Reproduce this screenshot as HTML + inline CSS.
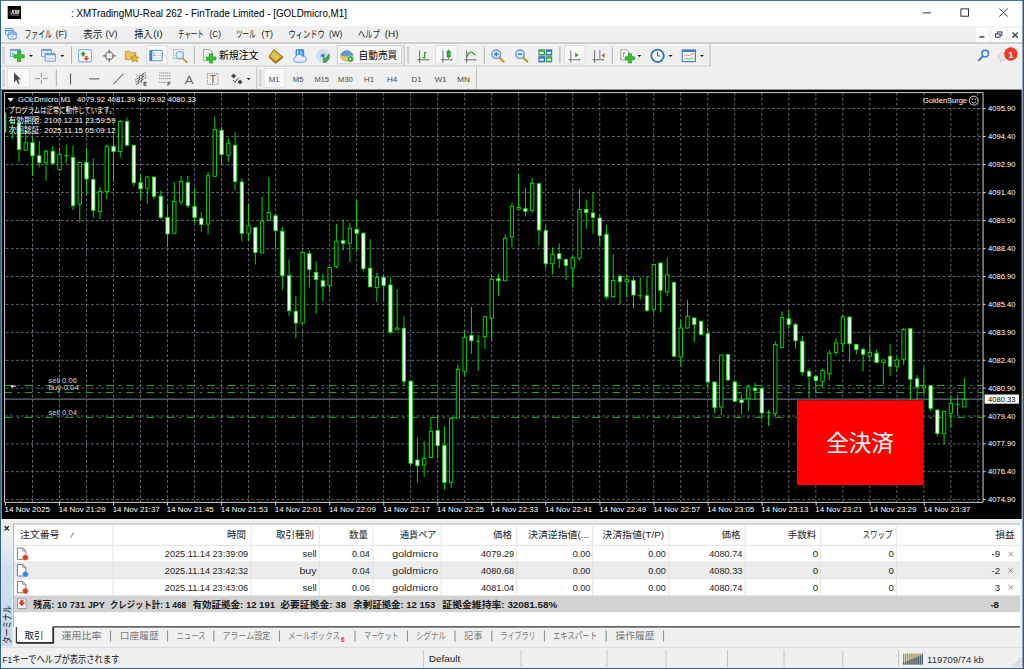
<!DOCTYPE html>
<html lang="ja"><head><meta charset="utf-8"><title>MetaTrader 4 - GOLDmicro,M1</title>
<style>html,body{margin:0;padding:0;background:#f0f0f0}body{width:1024px;height:669px;overflow:hidden;position:relative;font-family:"Liberation Sans",sans-serif}svg text{white-space:pre}</style></head>
<body>
<svg width="1024" height="669" viewBox="0 0 1024 669" font-family='"Liberation Sans", sans-serif' style="position:absolute;left:0;top:0;display:block"><rect x="0.00" y="0.00" width="1024.00" height="669.00" fill="#f0f0f0"/>
<rect x="0.00" y="0.00" width="1024.00" height="26.20" fill="#ffffff"/>
<rect x="7.70" y="6.00" width="13.30" height="13.00" fill="#000000"/>
<g transform="translate(14.6 13.6) skewX(-12)"><text x="0" y="0" font-size="6.2" font-weight="bold" fill="#ffffff" text-anchor="middle" textLength="8.4" lengthAdjust="spacingAndGlyphs">XM</text></g>
<rect x="9.30" y="10.60" width="1.20" height="2.20" fill="#d01818"/>
<rect x="10.40" y="14.60" width="8.60" height="0.80" fill="#b0b0b0"/>
<text x="71.00" y="17.20" font-size="10.20" fill="#000000" textLength="276.00" lengthAdjust="spacingAndGlyphs">: XMTradingMU-Real 262 - FinTrade Limited - [GOLDmicro,M1]</text>
<line x1="922.90" y1="12.90" x2="931.00" y2="12.90" stroke="#1a1a1a" stroke-width="0.9"/>
<rect x="960.90" y="8.90" width="7.60" height="7.30" fill="none" stroke="#1a1a1a" stroke-width="0.9"/>
<path d="M999.3 8.6 L1007.8 16.5 M1007.8 8.6 L999.3 16.5" stroke="#1a1a1a" stroke-width="0.9" fill="none"/>
<g fill="#ffffff" stroke="#4a8fd8" stroke-width="1"><rect x="5.6" y="28.6" width="7.6" height="6.6" rx="1"/><rect x="8.2" y="32.2" width="8" height="6.8" rx="1"/></g><path d="M5.6 30.6 h7.6 M8.2 34.2 h8" stroke="#4a8fd8" stroke-width="1.2"/><path d="M10 37.4 l1.2 -1.6 l1.2 1.6 l1.2 -1.6" stroke="#4a8fd8" stroke-width="0.6" fill="none"/>
<text x="24.40" y="37.60" font-size="10" fill="#1a1a1a" font-family="'Liberation Sans','Noto Sans CJK JP',sans-serif" textLength="27.50" lengthAdjust="spacingAndGlyphs">ファイル</text>
<text x="55.60" y="37.40" font-size="9.80" fill="#1a1a1a" textLength="11.30" lengthAdjust="spacingAndGlyphs">(F)</text>
<text x="83.00" y="37.60" font-size="10" fill="#1a1a1a" font-family="'Liberation Sans','Noto Sans CJK JP',sans-serif" textLength="19.50" lengthAdjust="spacingAndGlyphs">表示</text>
<text x="105.60" y="37.40" font-size="9.80" fill="#1a1a1a" textLength="11.90" lengthAdjust="spacingAndGlyphs">(V)</text>
<text x="134.25" y="37.60" font-size="10" fill="#1a1a1a" font-family="'Liberation Sans','Noto Sans CJK JP',sans-serif" textLength="18.24" lengthAdjust="spacingAndGlyphs">挿入</text>
<text x="153.20" y="37.40" font-size="9.80" fill="#1a1a1a" textLength="9.30" lengthAdjust="spacingAndGlyphs">(I)</text>
<text x="178.00" y="37.60" font-size="10" fill="#1a1a1a" font-family="'Liberation Sans','Noto Sans CJK JP',sans-serif" textLength="25.76" lengthAdjust="spacingAndGlyphs">チャート</text>
<text x="209.50" y="37.40" font-size="9.80" fill="#1a1a1a" textLength="11.50" lengthAdjust="spacingAndGlyphs">(C)</text>
<text x="236.00" y="37.60" font-size="10" fill="#1a1a1a" font-family="'Liberation Sans','Noto Sans CJK JP',sans-serif" textLength="19.50" lengthAdjust="spacingAndGlyphs">ツール</text>
<text x="261.50" y="37.40" font-size="9.80" fill="#1a1a1a" textLength="11.50" lengthAdjust="spacingAndGlyphs">(T)</text>
<text x="288.50" y="37.60" font-size="10" fill="#1a1a1a" font-family="'Liberation Sans','Noto Sans CJK JP',sans-serif" textLength="36.25" lengthAdjust="spacingAndGlyphs">ウィンドウ</text>
<text x="329.00" y="37.40" font-size="9.80" fill="#1a1a1a" textLength="13.25" lengthAdjust="spacingAndGlyphs">(W)</text>
<text x="358.00" y="37.60" font-size="10" fill="#1a1a1a" font-family="'Liberation Sans','Noto Sans CJK JP',sans-serif" textLength="21.75" lengthAdjust="spacingAndGlyphs">ヘルプ</text>
<text x="384.75" y="37.40" font-size="9.80" fill="#1a1a1a" textLength="13.75" lengthAdjust="spacingAndGlyphs">(H)</text>
<rect x="976.00" y="27.80" width="13.10" height="13.70" fill="#fdfdfd"/>
<rect x="991.60" y="27.80" width="14.00" height="13.70" fill="#fdfdfd"/>
<rect x="1007.60" y="27.80" width="13.80" height="13.70" fill="#fdfdfd"/>
<line x1="979.40" y1="36.90" x2="984.40" y2="36.90" stroke="#44546a" stroke-width="1.6"/>
<g fill="none" stroke="#44546a" stroke-width="1.1"><rect x="997.4" y="31.9" width="4.4" height="3.4"/><rect x="995.6" y="33.9" width="4.4" height="3.4" fill="#fdfdfd"/></g>
<path d="M1012.5 32.5 L1017.7 37.6 M1017.7 32.5 L1012.5 37.6" stroke="#44546a" stroke-width="1.6" fill="none"/>
<line x1="0.00" y1="43.20" x2="1024.00" y2="43.20" stroke="#8c8c8c" stroke-width="1.0"/>
<line x1="0.00" y1="44.00" x2="1024.00" y2="44.00" stroke="#ffffff" stroke-width="0.8"/>
<line x1="0.00" y1="66.30" x2="710.00" y2="66.30" stroke="#b4b4b4" stroke-width="0.9"/>
<line x1="710.00" y1="44.00" x2="710.00" y2="66.60" stroke="#b4b4b4" stroke-width="0.9"/>
<line x1="0.00" y1="67.10" x2="710.00" y2="67.10" stroke="#ffffff" stroke-width="0.8"/>
<line x1="476.50" y1="67.50" x2="476.50" y2="88.80" stroke="#b4b4b4" stroke-width="0.9"/>
<line x1="256.80" y1="67.50" x2="256.80" y2="88.80" stroke="#b4b4b4" stroke-width="0.9"/>
<line x1="404.00" y1="45.00" x2="404.00" y2="66.00" stroke="#b4b4b4" stroke-width="0.9"/>
<rect x="2.40" y="47.00" width="2.40" height="0.90" fill="#b8b8b8"/>
<rect x="2.40" y="48.70" width="2.40" height="0.90" fill="#b8b8b8"/>
<rect x="2.40" y="50.40" width="2.40" height="0.90" fill="#b8b8b8"/>
<rect x="2.40" y="52.10" width="2.40" height="0.90" fill="#b8b8b8"/>
<rect x="2.40" y="53.80" width="2.40" height="0.90" fill="#b8b8b8"/>
<rect x="2.40" y="55.50" width="2.40" height="0.90" fill="#b8b8b8"/>
<rect x="2.40" y="57.20" width="2.40" height="0.90" fill="#b8b8b8"/>
<rect x="2.40" y="58.90" width="2.40" height="0.90" fill="#b8b8b8"/>
<rect x="2.40" y="60.60" width="2.40" height="0.90" fill="#b8b8b8"/>
<rect x="2.40" y="62.30" width="2.40" height="0.90" fill="#b8b8b8"/>
<rect x="2.40" y="70.00" width="2.40" height="0.90" fill="#b8b8b8"/>
<rect x="2.40" y="71.70" width="2.40" height="0.90" fill="#b8b8b8"/>
<rect x="2.40" y="73.40" width="2.40" height="0.90" fill="#b8b8b8"/>
<rect x="2.40" y="75.10" width="2.40" height="0.90" fill="#b8b8b8"/>
<rect x="2.40" y="76.80" width="2.40" height="0.90" fill="#b8b8b8"/>
<rect x="2.40" y="78.50" width="2.40" height="0.90" fill="#b8b8b8"/>
<rect x="2.40" y="80.20" width="2.40" height="0.90" fill="#b8b8b8"/>
<rect x="2.40" y="81.90" width="2.40" height="0.90" fill="#b8b8b8"/>
<rect x="2.40" y="83.60" width="2.40" height="0.90" fill="#b8b8b8"/>
<rect x="2.40" y="85.30" width="2.40" height="0.90" fill="#b8b8b8"/>
<rect x="259.20" y="70.00" width="2.40" height="0.90" fill="#b8b8b8"/>
<rect x="259.20" y="71.70" width="2.40" height="0.90" fill="#b8b8b8"/>
<rect x="259.20" y="73.40" width="2.40" height="0.90" fill="#b8b8b8"/>
<rect x="259.20" y="75.10" width="2.40" height="0.90" fill="#b8b8b8"/>
<rect x="259.20" y="76.80" width="2.40" height="0.90" fill="#b8b8b8"/>
<rect x="259.20" y="78.50" width="2.40" height="0.90" fill="#b8b8b8"/>
<rect x="259.20" y="80.20" width="2.40" height="0.90" fill="#b8b8b8"/>
<rect x="259.20" y="81.90" width="2.40" height="0.90" fill="#b8b8b8"/>
<rect x="259.20" y="83.60" width="2.40" height="0.90" fill="#b8b8b8"/>
<rect x="259.20" y="85.30" width="2.40" height="0.90" fill="#b8b8b8"/>
<rect x="407.00" y="47.00" width="2.40" height="0.90" fill="#b8b8b8"/>
<rect x="407.00" y="48.70" width="2.40" height="0.90" fill="#b8b8b8"/>
<rect x="407.00" y="50.40" width="2.40" height="0.90" fill="#b8b8b8"/>
<rect x="407.00" y="52.10" width="2.40" height="0.90" fill="#b8b8b8"/>
<rect x="407.00" y="53.80" width="2.40" height="0.90" fill="#b8b8b8"/>
<rect x="407.00" y="55.50" width="2.40" height="0.90" fill="#b8b8b8"/>
<rect x="407.00" y="57.20" width="2.40" height="0.90" fill="#b8b8b8"/>
<rect x="407.00" y="58.90" width="2.40" height="0.90" fill="#b8b8b8"/>
<rect x="407.00" y="60.60" width="2.40" height="0.90" fill="#b8b8b8"/>
<rect x="407.00" y="62.30" width="2.40" height="0.90" fill="#b8b8b8"/>
<line x1="71.50" y1="46.60" x2="71.50" y2="63.50" stroke="#a8a8a8" stroke-width="0.9"/>
<line x1="194.30" y1="46.60" x2="194.30" y2="63.50" stroke="#a8a8a8" stroke-width="0.9"/>
<line x1="484.30" y1="46.60" x2="484.30" y2="63.50" stroke="#a8a8a8" stroke-width="0.9"/>
<line x1="559.90" y1="46.60" x2="559.90" y2="63.50" stroke="#a8a8a8" stroke-width="0.9"/>
<line x1="612.30" y1="46.60" x2="612.30" y2="63.50" stroke="#a8a8a8" stroke-width="0.9"/>
<line x1="56.30" y1="69.50" x2="56.30" y2="86.50" stroke="#a8a8a8" stroke-width="0.9"/>
<rect x="337.30" y="45.60" width="64.30" height="18.20" fill="#f8f8f8" stroke="#c4c4c4" stroke-width="0.8"/>
<rect x="10.6" y="49.4" width="9.8" height="7.2" fill="#e4edf8" stroke="#6f9fd8" stroke-width="0.9"/><rect x="10.6" y="49.4" width="9.8" height="1.6" fill="#6f9fd8"/><path d="M12.4 52.4 v3 M12 54 h2.6" stroke="#5a84b8" stroke-width="0.6"/>
<path d="M17.50 51.10 h3.20 v3.60 h3.60 v3.20 h-3.60 v3.60 h-3.20 v-3.60 h-3.60 v-3.20 h3.60 z" fill="#2cc82c" stroke="#168c16" stroke-width="0.6"/>
<path d="M29.00 55.00 h4 l-2 2.1 z" fill="#1a1a1a"/>
<g fill="#eaf1fa" stroke="#6a9cd8" stroke-width="1"><rect x="41.6" y="49.4" width="9.8" height="7.4" rx="0.6"/><rect x="45.2" y="53.6" width="10.2" height="7.6" rx="0.6"/></g><path d="M41.6 50.4 h9.8 M45.2 54.6 h10.2" stroke="#6a9cd8" stroke-width="1.1"/><path d="M43.4 53.2 h6 M46.8 58.6 h7" stroke="#7f9fc4" stroke-width="0.6"/>
<path d="M60.30 55.00 h4 l-2 2.1 z" fill="#1a1a1a"/>
<rect x="78.6" y="49.6" width="12.8" height="12.2" rx="1.4" fill="#ffffff" stroke="#82b0e2" stroke-width="1.2"/><path d="M83.2 51.2 l3.2 3 h-2 v2.2 h-2.4 v-2.2 h-2 z" fill="#22a62a"/><path d="M86.4 61 l-3.2 -3 h2 v-2.2 h2.4 v2.2 h2 z" fill="#e8542c"/>
<g fill="none" stroke="#747474" stroke-width="1.15"><circle cx="109.3" cy="55.8" r="3.9"/><path d="M109.3 49.4 v4 M109.3 58.2 v4 M102.8 55.8 h4 M111.8 55.8 h4"/></g>
<path d="M125.4 51.2 h4 l1 1.2 h5.4 v7.2 h-10.4 z" fill="#e9c55c" stroke="#b08a28" stroke-width="0.7"/><path d="M134.6 54.2 l1.4 2.6 2.9 .4 -2.1 2 .5 2.9 -2.7 -1.4 -2.6 1.4 .5 -2.9 -2.1 -2 2.9 -.4 z" fill="#e3b43a" stroke="#a87c1c" stroke-width="0.6"/>
<rect x="146.40" y="45.60" width="20.60" height="18.40" fill="#f9f9f9" stroke="#dadada" stroke-width="0.8"/>
<rect x="149.8" y="50.4" width="12.4" height="10.4" rx="0.8" fill="#ffffff" stroke="#4a8ad4" stroke-width="1.0"/><rect x="149.8" y="50.4" width="2.6" height="10.4" fill="#3c7fd0"/><path d="M153.6 53 h7.6 M153.6 55.4 h7.6 M153.6 57.8 h7.6" stroke="#9ab8dc" stroke-width="0.7"/><path d="M153.2 53 h1.4 M153.2 55.4 h1.4" stroke="#e04020" stroke-width="0.9"/>
<rect x="173.6" y="49.6" width="9.6" height="9" fill="#f4f4f4" stroke="#b0b0b0" stroke-width="0.7"/><circle cx="179.6" cy="55.2" r="3.7" fill="#dcecfa" fill-opacity="0.85" stroke="#6aa0d8" stroke-width="1.1"/><path d="M182.4 58.2 l4.4 4.2" stroke="#c8962c" stroke-width="1.8" stroke-linecap="round"/>
<path d="M203.6 49.6 h6 l2.6 2.6 v8.4 h-8.6 z" fill="#ffffff" stroke="#8a8a8a" stroke-width="0.8"/><path d="M205.2 53 h4 M205.2 55 h4" stroke="#b0b0b0" stroke-width="0.6"/>
<path d="M209.60 53.70 h3.00 v3.20 h3.20 v3.00 h-3.20 v3.20 h-3.00 v-3.20 h-3.20 v-3.00 h3.20 z" fill="#2cc82c" stroke="#168c16" stroke-width="0.6"/>
<path d="M273.8 49.8 l8.8 7.2 -7 5.6 -6.4 -6 z" fill="#d8c244" stroke="#b07a2a" stroke-width="1.1" stroke-linejoin="round"/><path d="M269.4 57.2 l6.2 5.4 6.6 -5.2" stroke="#9a621c" stroke-width="1.5" fill="none" stroke-linejoin="round"/><path d="M272.6 53.4 l5.6 4.6" stroke="#f4e89a" stroke-width="0.7"/>
<rect x="295.6" y="49.2" width="8.6" height="8" rx="0.8" fill="#3a8ee0"/><path d="M297.7 50.6 v5.6" stroke="#ffffff" stroke-width="0.9"/><path d="M299.6 52 h2.8 M299.6 54 h2.8" stroke="#d8eaff" stroke-width="0.8"/><path d="M296 62.2 a2.9 2.9 0 0 1 -.2 -5.6 a3.6 3.4 0 0 1 6.6 -.4 a3 3 0 0 1 1.6 6 z" fill="#e6edf6" stroke="#5f93cc" stroke-width="0.9"/>
<g fill="none" stroke-width="0.9"><circle cx="322.8" cy="55.8" r="2.5" stroke="#7fb0e0"/><circle cx="322.8" cy="55.8" r="4.6" stroke="#9cc0e6"/><circle cx="322.8" cy="55.8" r="6.5" stroke="#c0d4ea"/></g><path d="M323.4 62.4 v-6.2 l1.4 2.8 4.4 -5.2 v5.2 l-3.6 3.4 z" fill="#3fa04a" stroke="#2c7c36" stroke-width="0.4"/><circle cx="322.9" cy="55.4" r="1.5" fill="#2468c8"/>
<ellipse cx="346.8" cy="56.4" rx="6.2" ry="4.6" fill="#e9c860" stroke="#a88a30" stroke-width="0.6"/><path d="M340.6 54.4 q6 -8 12.6 0 q-6 3.4 -12.6 0z" fill="#5f9ad6" stroke="#3f78b8" stroke-width="0.5"/><circle cx="350.4" cy="59" r="3.2" fill="#22a82a" stroke="#ffffff" stroke-width="0.5"/><path d="M349.4 57.4 l2.6 1.6 -2.6 1.6 z" fill="#ffffff"/>
<path d="M419.60 50.40 v12.40 M417.40 59.80 h11.00" stroke="#5a5a5a" stroke-width="0.85" fill="none"/>
<path d="M427.80 58.80 l1.6 1 -1.6 1z" fill="#5a5a5a"/>
<path d="M424.6 52 v6.4 M424.6 52.6 h1.8 M422.8 57.6 h1.8" stroke="#1f9a2a" stroke-width="1.1" fill="none"/>
<rect x="435.40" y="45.60" width="21.80" height="18.40" fill="#f9f9f9" stroke="#dadada" stroke-width="0.8"/>
<path d="M443.00 50.40 v12.40 M440.80 59.80 h11.00" stroke="#5a5a5a" stroke-width="0.85" fill="none"/>
<path d="M451.20 58.80 l1.6 1 -1.6 1z" fill="#5a5a5a"/>
<path d="M448.6 49.4 v9.4" stroke="#1f9a2a" stroke-width="0.9"/><rect x="447" y="51.2" width="3.2" height="5.8" fill="#22c022" stroke="#0f7a18" stroke-width="0.6"/>
<path d="M466.60 50.40 v12.40 M464.40 59.80 h11.00" stroke="#5a5a5a" stroke-width="0.85" fill="none"/>
<path d="M474.80 58.80 l1.6 1 -1.6 1z" fill="#5a5a5a"/>
<path d="M466.4 57.2 q3.2 -6.4 5.6 -5 l3.6 3.2" stroke="#1f9a2a" stroke-width="1.1" fill="none"/>
<path d="M499.00 57.20 l4.6 4.4" stroke="#c89a30" stroke-width="2.2" stroke-linecap="round"/>
<circle cx="496.20" cy="54.20" r="4.3" fill="#d8e8f8" stroke="#4f8fd8" stroke-width="1.2"/>
<path d="M494.00 54.20 h4.4" stroke="#2f6fc0" stroke-width="1.3"/>
<path d="M496.20 52.00 v4.4" stroke="#2f6fc0" stroke-width="1.3"/>
<path d="M522.80 57.20 l4.6 4.4" stroke="#c89a30" stroke-width="2.2" stroke-linecap="round"/>
<circle cx="520.00" cy="54.20" r="4.3" fill="#d8e8f8" stroke="#4f8fd8" stroke-width="1.2"/>
<path d="M517.80 54.20 h4.4" stroke="#2f6fc0" stroke-width="1.3"/>
<rect x="538.40" y="49.40" width="6.6" height="6.2" fill="#3aa03a"/><rect x="539.60" y="51.80" width="4.2" height="2.2" fill="#e8f0f8"/>
<rect x="545.60" y="49.40" width="6.6" height="6.2" fill="#2f6fd0"/><rect x="546.80" y="51.80" width="4.2" height="2.2" fill="#e8f0f8"/>
<rect x="538.40" y="56.20" width="6.6" height="6.2" fill="#2f6fd0"/><rect x="539.60" y="58.60" width="4.2" height="2.2" fill="#e8f0f8"/>
<rect x="545.60" y="56.20" width="6.6" height="6.2" fill="#3aa03a"/><rect x="546.80" y="58.60" width="4.2" height="2.2" fill="#e8f0f8"/>
<rect x="564.40" y="45.60" width="20.60" height="18.40" fill="#f9f9f9" stroke="#dadada" stroke-width="0.8"/>
<path d="M570.80 50.40 v12.40 M568.60 59.80 h11.00" stroke="#5a5a5a" stroke-width="0.85" fill="none"/>
<path d="M579.00 58.80 l1.6 1 -1.6 1z" fill="#5a5a5a"/>
<path d="M575.2 52.4 l3.4 2.6 -3.4 2.6z" fill="#22a82a"/>
<path d="M594.60 50.40 v12.40 M592.40 59.80 h11.00" stroke="#5a5a5a" stroke-width="0.85" fill="none"/>
<path d="M602.80 58.80 l1.6 1 -1.6 1z" fill="#5a5a5a"/>
<path d="M599.8 50 v9" stroke="#3a78c8" stroke-width="0.9"/><path d="M604.6 53 l-3.2 2.4 3.2 2.4z" fill="#d05a20"/>
<path d="M620.8 49.8 h6 l2 2 v8 h-8 z" fill="#ffffff" stroke="#8a8a8a" stroke-width="0.8"/><text x="622.4" y="57.2" font-size="6.5" font-style="italic" fill="#505050">f</text>
<path d="M628.40 53.60 h3.00 v3.20 h3.20 v3.00 h-3.20 v3.20 h-3.00 v-3.20 h-3.20 v-3.00 h3.20 z" fill="#2cc82c" stroke="#168c16" stroke-width="0.6"/>
<path d="M637.40 55.00 h4 l-2 2.1 z" fill="#1a1a1a"/>
<circle cx="657.5" cy="55.8" r="6.2" fill="#ffffff" stroke="#2f6fc8" stroke-width="1.9"/><path d="M657.5 52 v4 h3" stroke="#505050" stroke-width="0.9" fill="none"/>
<path d="M668.60 55.00 h4 l-2 2.1 z" fill="#1a1a1a"/>
<rect x="682.2" y="50" width="13.2" height="11.6" fill="#ffffff" stroke="#3f80d0" stroke-width="1.2"/><rect x="682.2" y="50" width="13.2" height="2" fill="#3f80d0"/><path d="M684 56 l2.6 -1 2.6 .6 3 -1.8 1.8 .2" stroke="#d06030" stroke-width="0.8" fill="none"/><path d="M684 59.6 l2.6 -1.4 2.4 1.2 2.6 -1.6 2 1" stroke="#2f9a3a" stroke-width="0.8" fill="none"/>
<path d="M699.90 55.00 h4 l-2 2.1 z" fill="#1a1a1a"/>
<circle cx="985.2" cy="53.6" r="3.3" fill="#ffffff" stroke="#2f78d8" stroke-width="1.5"/><path d="M982.8 56.4 l-4 4" stroke="#2f78d8" stroke-width="2" stroke-linecap="round"/>
<path d="M999 58 a4.6 3.8 0 1 1 4 2 l-2.6 2.2 .4 -2.6 z" fill="#e4e4e4" stroke="#b8b8b8" stroke-width="0.6"/>
<circle cx="1010.8" cy="54.0" r="6.7" fill="#ee3a24"/><text x="1010.8" y="57.6" font-size="9.4" font-weight="bold" fill="#ffffff" text-anchor="middle">1</text>
<rect x="7.60" y="68.60" width="21.80" height="18.60" fill="#f9f9f9" stroke="#dadada" stroke-width="0.8"/>
<path d="M14 72.6 v9.6 l2.3 -2.1 1.8 4 1.6 -.7 -1.8 -3.9 3 -.2 z" fill="#4a4a4a"/>
<path d="M41.4 72.8 v4.6 M41.4 79.8 v4.6 M35.2 78.6 h4.8 M42.8 78.6 h4.8" stroke="#8a8a8a" stroke-width="0.9"/>
<path d="M70.6 73.4 v11" stroke="#4a4a4a" stroke-width="1"/>
<path d="M89.4 78.9 h10" stroke="#4a4a4a" stroke-width="1"/>
<path d="M113.4 84.2 L123.4 73.8" stroke="#4a4a4a" stroke-width="1"/>
<g stroke="#4a4a4a" stroke-width="0.95" fill="none"><path d="M135.2 80.2 l10.6 -8 M135.6 82.4 l10.6 -8 M136 84.6 l10.6 -8" stroke-dasharray="1.6 0.7"/><path d="M138 84.6 l2 -9.8 M141.2 82.8 l2 -9.8" stroke-width="0.8"/></g>
<path d="M144 81.9 v3.8 M144 82.3 h2.8 M144 83.8 h2.3 M144 85.3 h2.8" stroke="#4a4a4a" stroke-width="0.9" fill="none"/>
<path d="M159.2 73 h11.6 M159.2 75.8 h11.6 M159.2 78.6 h11.6 M159.2 82.4 h8" stroke="#606060" stroke-width="0.8" stroke-dasharray="1.2 0.8"/>
<path d="M168 81.9 v3.9 M168 82.3 h2.8 M168 83.9 h2.3" stroke="#4a4a4a" stroke-width="0.9" fill="none"/>
<text x="184.80" y="83.60" font-size="11.60" fill="#686868" textLength="8.80" lengthAdjust="spacingAndGlyphs">A</text>
<rect x="207.4" y="73.4" width="10.6" height="11" fill="none" stroke="#707070" stroke-width="0.8" stroke-dasharray="1.2 1"/>
<text x="209.40" y="83.40" font-size="10.60" fill="#5c5c5c" textLength="6.90" lengthAdjust="spacingAndGlyphs">T</text>
<path d="M233.6 73.6 l2.6 2.4 -2.6 2.4 -2.6 -2.4z M240 79.6 l2.6 2.4 -2.6 2.4 -2.6 -2.4z" fill="#4a4a4a"/><path d="M233 80 l2 2.2 3.4 -4.4" stroke="#4a4a4a" stroke-width="1" fill="none"/>
<path d="M246.60 78.00 h4 l-2 2.1 z" fill="#1a1a1a"/>
<text x="218.90" y="58.60" font-size="10" fill="#000000" font-family="'Liberation Sans','Noto Sans CJK JP',sans-serif" textLength="39.50" lengthAdjust="spacingAndGlyphs">新規注文</text>
<text x="358.50" y="58.60" font-size="10" fill="#000000" font-family="'Liberation Sans','Noto Sans CJK JP',sans-serif" textLength="38.80" lengthAdjust="spacingAndGlyphs">自動売買</text>
<rect x="264.00" y="68.60" width="21.00" height="18.60" fill="#f9f9f9" stroke="#dadada" stroke-width="0.8"/>
<text x="268.75" y="81.90" font-size="7.90" fill="#484848" textLength="10.85" lengthAdjust="spacingAndGlyphs">M1</text>
<text x="292.75" y="81.90" font-size="7.90" fill="#484848" textLength="10.65" lengthAdjust="spacingAndGlyphs">M5</text>
<text x="314.60" y="81.90" font-size="7.90" fill="#484848" textLength="14.40" lengthAdjust="spacingAndGlyphs">M15</text>
<text x="337.90" y="81.90" font-size="7.90" fill="#484848" textLength="15.00" lengthAdjust="spacingAndGlyphs">M30</text>
<text x="364.00" y="81.90" font-size="7.90" fill="#484848" textLength="10.00" lengthAdjust="spacingAndGlyphs">H1</text>
<text x="387.00" y="81.90" font-size="7.90" fill="#484848" textLength="10.25" lengthAdjust="spacingAndGlyphs">H4</text>
<text x="411.60" y="81.90" font-size="7.90" fill="#484848" textLength="10.00" lengthAdjust="spacingAndGlyphs">D1</text>
<text x="434.75" y="81.90" font-size="7.90" fill="#484848" textLength="11.85" lengthAdjust="spacingAndGlyphs">W1</text>
<text x="457.00" y="81.90" font-size="7.90" fill="#484848" textLength="13.00" lengthAdjust="spacingAndGlyphs">MN</text>
<rect x="1.00" y="89.00" width="1020.60" height="430.00" fill="#8a8a8a"/>
<rect x="2.00" y="90.00" width="1019.60" height="429.00" fill="#000000"/>
<g shape-rendering="auto">
<line x1="32.50" y1="92.80" x2="32.50" y2="502.40" stroke="#778899" stroke-width="0.8" stroke-dasharray="2.7 2.33"/>
<line x1="59.51" y1="92.80" x2="59.51" y2="502.40" stroke="#778899" stroke-width="0.8" stroke-dasharray="2.7 2.33"/>
<line x1="86.52" y1="92.80" x2="86.52" y2="502.40" stroke="#778899" stroke-width="0.8" stroke-dasharray="2.7 2.33"/>
<line x1="113.53" y1="92.80" x2="113.53" y2="502.40" stroke="#778899" stroke-width="0.8" stroke-dasharray="2.7 2.33"/>
<line x1="140.54" y1="92.80" x2="140.54" y2="502.40" stroke="#778899" stroke-width="0.8" stroke-dasharray="2.7 2.33"/>
<line x1="167.56" y1="92.80" x2="167.56" y2="502.40" stroke="#778899" stroke-width="0.8" stroke-dasharray="2.7 2.33"/>
<line x1="194.57" y1="92.80" x2="194.57" y2="502.40" stroke="#778899" stroke-width="0.8" stroke-dasharray="2.7 2.33"/>
<line x1="221.58" y1="92.80" x2="221.58" y2="502.40" stroke="#778899" stroke-width="0.8" stroke-dasharray="2.7 2.33"/>
<line x1="248.59" y1="92.80" x2="248.59" y2="502.40" stroke="#778899" stroke-width="0.8" stroke-dasharray="2.7 2.33"/>
<line x1="275.60" y1="92.80" x2="275.60" y2="502.40" stroke="#778899" stroke-width="0.8" stroke-dasharray="2.7 2.33"/>
<line x1="302.61" y1="92.80" x2="302.61" y2="502.40" stroke="#778899" stroke-width="0.8" stroke-dasharray="2.7 2.33"/>
<line x1="329.62" y1="92.80" x2="329.62" y2="502.40" stroke="#778899" stroke-width="0.8" stroke-dasharray="2.7 2.33"/>
<line x1="356.63" y1="92.80" x2="356.63" y2="502.40" stroke="#778899" stroke-width="0.8" stroke-dasharray="2.7 2.33"/>
<line x1="383.64" y1="92.80" x2="383.64" y2="502.40" stroke="#778899" stroke-width="0.8" stroke-dasharray="2.7 2.33"/>
<line x1="410.65" y1="92.80" x2="410.65" y2="502.40" stroke="#778899" stroke-width="0.8" stroke-dasharray="2.7 2.33"/>
<line x1="437.66" y1="92.80" x2="437.66" y2="502.40" stroke="#778899" stroke-width="0.8" stroke-dasharray="2.7 2.33"/>
<line x1="464.68" y1="92.80" x2="464.68" y2="502.40" stroke="#778899" stroke-width="0.8" stroke-dasharray="2.7 2.33"/>
<line x1="491.69" y1="92.80" x2="491.69" y2="502.40" stroke="#778899" stroke-width="0.8" stroke-dasharray="2.7 2.33"/>
<line x1="518.70" y1="92.80" x2="518.70" y2="502.40" stroke="#778899" stroke-width="0.8" stroke-dasharray="2.7 2.33"/>
<line x1="545.71" y1="92.80" x2="545.71" y2="502.40" stroke="#778899" stroke-width="0.8" stroke-dasharray="2.7 2.33"/>
<line x1="572.72" y1="92.80" x2="572.72" y2="502.40" stroke="#778899" stroke-width="0.8" stroke-dasharray="2.7 2.33"/>
<line x1="599.73" y1="92.80" x2="599.73" y2="502.40" stroke="#778899" stroke-width="0.8" stroke-dasharray="2.7 2.33"/>
<line x1="626.74" y1="92.80" x2="626.74" y2="502.40" stroke="#778899" stroke-width="0.8" stroke-dasharray="2.7 2.33"/>
<line x1="653.75" y1="92.80" x2="653.75" y2="502.40" stroke="#778899" stroke-width="0.8" stroke-dasharray="2.7 2.33"/>
<line x1="680.76" y1="92.80" x2="680.76" y2="502.40" stroke="#778899" stroke-width="0.8" stroke-dasharray="2.7 2.33"/>
<line x1="707.77" y1="92.80" x2="707.77" y2="502.40" stroke="#778899" stroke-width="0.8" stroke-dasharray="2.7 2.33"/>
<line x1="734.79" y1="92.80" x2="734.79" y2="502.40" stroke="#778899" stroke-width="0.8" stroke-dasharray="2.7 2.33"/>
<line x1="761.80" y1="92.80" x2="761.80" y2="502.40" stroke="#778899" stroke-width="0.8" stroke-dasharray="2.7 2.33"/>
<line x1="788.81" y1="92.80" x2="788.81" y2="502.40" stroke="#778899" stroke-width="0.8" stroke-dasharray="2.7 2.33"/>
<line x1="815.82" y1="92.80" x2="815.82" y2="502.40" stroke="#778899" stroke-width="0.8" stroke-dasharray="2.7 2.33"/>
<line x1="842.83" y1="92.80" x2="842.83" y2="502.40" stroke="#778899" stroke-width="0.8" stroke-dasharray="2.7 2.33"/>
<line x1="869.84" y1="92.80" x2="869.84" y2="502.40" stroke="#778899" stroke-width="0.8" stroke-dasharray="2.7 2.33"/>
<line x1="896.85" y1="92.80" x2="896.85" y2="502.40" stroke="#778899" stroke-width="0.8" stroke-dasharray="2.7 2.33"/>
<line x1="923.86" y1="92.80" x2="923.86" y2="502.40" stroke="#778899" stroke-width="0.8" stroke-dasharray="2.7 2.33"/>
<line x1="950.87" y1="92.80" x2="950.87" y2="502.40" stroke="#778899" stroke-width="0.8" stroke-dasharray="2.7 2.33"/>
<line x1="977.88" y1="92.80" x2="977.88" y2="502.40" stroke="#778899" stroke-width="0.8" stroke-dasharray="2.7 2.33"/>
<line x1="4.60" y1="108.48" x2="983.07" y2="108.48" stroke="#778899" stroke-width="0.8" stroke-dasharray="2.75 2.26" stroke-dashoffset="3.75"/>
<line x1="4.60" y1="136.50" x2="983.07" y2="136.50" stroke="#778899" stroke-width="0.8" stroke-dasharray="2.75 2.26" stroke-dashoffset="3.75"/>
<line x1="4.60" y1="164.50" x2="983.07" y2="164.50" stroke="#778899" stroke-width="0.8" stroke-dasharray="2.75 2.26" stroke-dashoffset="3.75"/>
<line x1="4.60" y1="192.55" x2="983.07" y2="192.55" stroke="#778899" stroke-width="0.8" stroke-dasharray="2.75 2.26" stroke-dashoffset="3.75"/>
<line x1="4.60" y1="220.55" x2="983.07" y2="220.55" stroke="#778899" stroke-width="0.8" stroke-dasharray="2.75 2.26" stroke-dashoffset="3.75"/>
<line x1="4.60" y1="248.58" x2="983.07" y2="248.58" stroke="#778899" stroke-width="0.8" stroke-dasharray="2.75 2.26" stroke-dashoffset="3.75"/>
<line x1="4.60" y1="276.50" x2="983.07" y2="276.50" stroke="#778899" stroke-width="0.8" stroke-dasharray="2.75 2.26" stroke-dashoffset="3.75"/>
<line x1="4.60" y1="304.40" x2="983.07" y2="304.40" stroke="#778899" stroke-width="0.8" stroke-dasharray="2.75 2.26" stroke-dashoffset="3.75"/>
<line x1="4.60" y1="332.35" x2="983.07" y2="332.35" stroke="#778899" stroke-width="0.8" stroke-dasharray="2.75 2.26" stroke-dashoffset="3.75"/>
<line x1="4.60" y1="360.30" x2="983.07" y2="360.30" stroke="#778899" stroke-width="0.8" stroke-dasharray="2.75 2.26" stroke-dashoffset="3.75"/>
<line x1="4.60" y1="388.19" x2="983.07" y2="388.19" stroke="#778899" stroke-width="0.8" stroke-dasharray="2.75 2.26" stroke-dashoffset="3.75"/>
<line x1="4.60" y1="416.00" x2="983.07" y2="416.00" stroke="#778899" stroke-width="0.8" stroke-dasharray="2.75 2.26" stroke-dashoffset="3.75"/>
<line x1="4.60" y1="443.85" x2="983.07" y2="443.85" stroke="#778899" stroke-width="0.8" stroke-dasharray="2.75 2.26" stroke-dashoffset="3.75"/>
<line x1="4.60" y1="471.65" x2="983.07" y2="471.65" stroke="#778899" stroke-width="0.8" stroke-dasharray="2.75 2.26" stroke-dashoffset="3.75"/>
<line x1="4.60" y1="499.45" x2="983.07" y2="499.45" stroke="#778899" stroke-width="0.8" stroke-dasharray="2.75 2.26" stroke-dashoffset="3.75"/>
<line x1="4.60" y1="385.50" x2="983.07" y2="385.50" stroke="#1fb81f" stroke-width="0.9" stroke-dasharray="7.6 5.07 2.53 5.07"/>
<line x1="4.60" y1="392.50" x2="983.07" y2="392.50" stroke="#1fb81f" stroke-width="0.9" stroke-dasharray="7.6 5.07 2.53 5.07"/>
<line x1="4.60" y1="417.45" x2="983.07" y2="417.45" stroke="#1fb81f" stroke-width="0.9" stroke-dasharray="7.6 5.07 2.53 5.07"/>
<line x1="4.60" y1="399.10" x2="983.07" y2="399.10" stroke="#7f8b9b" stroke-width="1.0"/>
<line x1="5.49" y1="112.50" x2="5.49" y2="132.50" stroke="#00f000" stroke-width="1.6"/>
<line x1="12.24" y1="120.40" x2="12.24" y2="139.30" stroke="#00f000" stroke-width="0.9"/>
<line x1="18.99" y1="118.25" x2="18.99" y2="162.00" stroke="#00f000" stroke-width="0.9"/>
<rect x="17.31" y="123.25" width="3.36" height="26.25" fill="#ffffff" stroke="#00f000" stroke-width="0.84"/>
<line x1="25.75" y1="122.00" x2="25.75" y2="150.25" stroke="#00f000" stroke-width="0.9"/>
<rect x="24.07" y="142.75" width="3.36" height="7.50" fill="#000000" stroke="#00f000" stroke-width="0.84"/>
<line x1="32.50" y1="137.00" x2="32.50" y2="175.75" stroke="#00f000" stroke-width="0.9"/>
<rect x="30.82" y="142.75" width="3.36" height="13.00" fill="#ffffff" stroke="#00f000" stroke-width="0.84"/>
<line x1="39.25" y1="140.75" x2="39.25" y2="167.00" stroke="#00f000" stroke-width="0.9"/>
<rect x="37.57" y="155.75" width="3.36" height="7.00" fill="#ffffff" stroke="#00f000" stroke-width="0.84"/>
<line x1="46.01" y1="149.50" x2="46.01" y2="180.75" stroke="#00f000" stroke-width="0.9"/>
<rect x="44.33" y="151.25" width="3.36" height="11.50" fill="#000000" stroke="#00f000" stroke-width="0.84"/>
<line x1="52.76" y1="145.75" x2="52.76" y2="164.50" stroke="#00f000" stroke-width="0.9"/>
<rect x="51.08" y="151.25" width="3.36" height="12.00" fill="#ffffff" stroke="#00f000" stroke-width="0.84"/>
<line x1="59.51" y1="148.25" x2="59.51" y2="170.00" stroke="#00f000" stroke-width="0.9"/>
<rect x="57.83" y="154.50" width="3.36" height="15.00" fill="#000000" stroke="#00f000" stroke-width="0.84"/>
<line x1="66.26" y1="144.50" x2="66.26" y2="163.25" stroke="#00f000" stroke-width="0.9"/>
<line x1="64.16" y1="155.75" x2="68.36" y2="155.75" stroke="#00f000" stroke-width="0.9"/>
<line x1="73.02" y1="145.75" x2="73.02" y2="210.00" stroke="#00f000" stroke-width="0.9"/>
<rect x="71.34" y="157.50" width="3.36" height="48.25" fill="#ffffff" stroke="#00f000" stroke-width="0.84"/>
<line x1="79.77" y1="162.00" x2="79.77" y2="222.50" stroke="#00f000" stroke-width="0.9"/>
<rect x="78.09" y="162.50" width="3.36" height="41.50" fill="#000000" stroke="#00f000" stroke-width="0.84"/>
<line x1="86.52" y1="148.25" x2="86.52" y2="194.50" stroke="#00f000" stroke-width="0.9"/>
<rect x="84.84" y="162.50" width="3.36" height="16.50" fill="#ffffff" stroke="#00f000" stroke-width="0.84"/>
<line x1="93.27" y1="158.25" x2="93.27" y2="217.75" stroke="#00f000" stroke-width="0.9"/>
<rect x="91.59" y="179.50" width="3.36" height="30.75" fill="#ffffff" stroke="#00f000" stroke-width="0.84"/>
<line x1="100.03" y1="187.00" x2="100.03" y2="219.50" stroke="#00f000" stroke-width="0.9"/>
<rect x="98.35" y="191.50" width="3.36" height="20.00" fill="#000000" stroke="#00f000" stroke-width="0.84"/>
<line x1="106.78" y1="144.50" x2="106.78" y2="199.00" stroke="#00f000" stroke-width="0.9"/>
<rect x="105.10" y="146.25" width="3.36" height="45.25" fill="#000000" stroke="#00f000" stroke-width="0.84"/>
<line x1="113.53" y1="135.75" x2="113.53" y2="182.00" stroke="#00f000" stroke-width="0.9"/>
<rect x="111.85" y="146.25" width="3.36" height="5.25" fill="#ffffff" stroke="#00f000" stroke-width="0.84"/>
<line x1="120.29" y1="120.00" x2="120.29" y2="157.50" stroke="#00f000" stroke-width="0.9"/>
<rect x="118.61" y="121.50" width="3.36" height="30.00" fill="#000000" stroke="#00f000" stroke-width="0.84"/>
<line x1="127.04" y1="117.50" x2="127.04" y2="145.75" stroke="#00f000" stroke-width="0.9"/>
<rect x="125.36" y="121.50" width="3.36" height="23.75" fill="#ffffff" stroke="#00f000" stroke-width="0.84"/>
<line x1="133.79" y1="145.25" x2="133.79" y2="186.50" stroke="#00f000" stroke-width="0.9"/>
<rect x="132.11" y="145.25" width="3.36" height="37.50" fill="#ffffff" stroke="#00f000" stroke-width="0.84"/>
<line x1="140.54" y1="174.50" x2="140.54" y2="199.50" stroke="#00f000" stroke-width="0.9"/>
<rect x="138.86" y="182.75" width="3.36" height="6.00" fill="#ffffff" stroke="#00f000" stroke-width="0.84"/>
<line x1="147.30" y1="175.75" x2="147.30" y2="204.00" stroke="#00f000" stroke-width="0.9"/>
<rect x="145.62" y="177.00" width="3.36" height="11.25" fill="#000000" stroke="#00f000" stroke-width="0.84"/>
<line x1="154.05" y1="177.00" x2="154.05" y2="199.00" stroke="#00f000" stroke-width="0.9"/>
<rect x="152.37" y="177.00" width="3.36" height="19.25" fill="#ffffff" stroke="#00f000" stroke-width="0.84"/>
<line x1="160.80" y1="190.75" x2="160.80" y2="219.00" stroke="#00f000" stroke-width="0.9"/>
<rect x="159.12" y="196.25" width="3.36" height="21.25" fill="#ffffff" stroke="#00f000" stroke-width="0.84"/>
<line x1="167.55" y1="205.75" x2="167.55" y2="247.00" stroke="#00f000" stroke-width="0.9"/>
<rect x="165.87" y="217.50" width="3.36" height="16.50" fill="#ffffff" stroke="#00f000" stroke-width="0.84"/>
<line x1="174.31" y1="182.00" x2="174.31" y2="234.00" stroke="#00f000" stroke-width="0.9"/>
<rect x="172.63" y="201.50" width="3.36" height="31.75" fill="#000000" stroke="#00f000" stroke-width="0.84"/>
<line x1="181.06" y1="175.75" x2="181.06" y2="205.00" stroke="#00f000" stroke-width="0.9"/>
<rect x="179.38" y="181.50" width="3.36" height="20.50" fill="#000000" stroke="#00f000" stroke-width="0.84"/>
<line x1="187.81" y1="175.75" x2="187.81" y2="208.25" stroke="#00f000" stroke-width="0.9"/>
<rect x="186.13" y="182.50" width="3.36" height="23.25" fill="#ffffff" stroke="#00f000" stroke-width="0.84"/>
<line x1="194.56" y1="188.25" x2="194.56" y2="223.25" stroke="#00f000" stroke-width="0.9"/>
<rect x="192.88" y="206.50" width="3.36" height="11.00" fill="#ffffff" stroke="#00f000" stroke-width="0.84"/>
<line x1="201.32" y1="212.00" x2="201.32" y2="232.00" stroke="#00f000" stroke-width="0.9"/>
<rect x="199.64" y="218.25" width="3.36" height="6.25" fill="#ffffff" stroke="#00f000" stroke-width="0.84"/>
<line x1="208.07" y1="172.00" x2="208.07" y2="234.50" stroke="#00f000" stroke-width="0.9"/>
<rect x="206.39" y="175.75" width="3.36" height="48.25" fill="#000000" stroke="#00f000" stroke-width="0.84"/>
<line x1="214.82" y1="116.50" x2="214.82" y2="177.00" stroke="#00f000" stroke-width="0.9"/>
<rect x="213.14" y="129.50" width="3.36" height="46.75" fill="#000000" stroke="#00f000" stroke-width="0.84"/>
<line x1="221.58" y1="127.00" x2="221.58" y2="164.50" stroke="#00f000" stroke-width="0.9"/>
<rect x="219.90" y="130.25" width="3.36" height="24.25" fill="#ffffff" stroke="#00f000" stroke-width="0.84"/>
<line x1="228.33" y1="138.25" x2="228.33" y2="162.00" stroke="#00f000" stroke-width="0.9"/>
<rect x="226.65" y="143.25" width="3.36" height="12.00" fill="#000000" stroke="#00f000" stroke-width="0.84"/>
<line x1="235.08" y1="132.00" x2="235.08" y2="190.25" stroke="#00f000" stroke-width="0.9"/>
<rect x="233.40" y="145.25" width="3.36" height="36.25" fill="#ffffff" stroke="#00f000" stroke-width="0.84"/>
<line x1="241.83" y1="178.25" x2="241.83" y2="241.50" stroke="#00f000" stroke-width="0.9"/>
<rect x="240.15" y="182.00" width="3.36" height="51.25" fill="#ffffff" stroke="#00f000" stroke-width="0.84"/>
<line x1="248.59" y1="203.75" x2="248.59" y2="241.25" stroke="#00f000" stroke-width="0.9"/>
<rect x="246.91" y="225.75" width="3.36" height="7.50" fill="#000000" stroke="#00f000" stroke-width="0.84"/>
<line x1="255.34" y1="227.50" x2="255.34" y2="264.50" stroke="#00f000" stroke-width="0.9"/>
<rect x="253.66" y="227.50" width="3.36" height="25.00" fill="#ffffff" stroke="#00f000" stroke-width="0.84"/>
<line x1="262.09" y1="197.00" x2="262.09" y2="253.00" stroke="#00f000" stroke-width="0.9"/>
<rect x="260.41" y="221.25" width="3.36" height="31.75" fill="#000000" stroke="#00f000" stroke-width="0.84"/>
<line x1="268.84" y1="177.00" x2="268.84" y2="220.50" stroke="#00f000" stroke-width="0.9"/>
<rect x="267.16" y="212.50" width="3.36" height="8.00" fill="#000000" stroke="#00f000" stroke-width="0.84"/>
<line x1="275.60" y1="213.75" x2="275.60" y2="248.75" stroke="#00f000" stroke-width="0.9"/>
<rect x="273.92" y="215.75" width="3.36" height="15.00" fill="#ffffff" stroke="#00f000" stroke-width="0.84"/>
<line x1="282.35" y1="227.00" x2="282.35" y2="290.00" stroke="#00f000" stroke-width="0.9"/>
<rect x="280.67" y="231.25" width="3.36" height="44.25" fill="#ffffff" stroke="#00f000" stroke-width="0.84"/>
<line x1="289.10" y1="259.50" x2="289.10" y2="316.25" stroke="#00f000" stroke-width="0.9"/>
<rect x="287.42" y="275.50" width="3.36" height="35.25" fill="#ffffff" stroke="#00f000" stroke-width="0.84"/>
<line x1="295.86" y1="295.75" x2="295.86" y2="338.25" stroke="#00f000" stroke-width="0.9"/>
<rect x="294.18" y="311.25" width="3.36" height="11.75" fill="#ffffff" stroke="#00f000" stroke-width="0.84"/>
<line x1="302.61" y1="251.25" x2="302.61" y2="323.75" stroke="#00f000" stroke-width="0.9"/>
<rect x="300.93" y="252.50" width="3.36" height="70.50" fill="#000000" stroke="#00f000" stroke-width="0.84"/>
<line x1="309.36" y1="250.00" x2="309.36" y2="287.50" stroke="#00f000" stroke-width="0.9"/>
<rect x="307.68" y="253.75" width="3.36" height="15.75" fill="#ffffff" stroke="#00f000" stroke-width="0.84"/>
<line x1="316.11" y1="261.25" x2="316.11" y2="313.75" stroke="#00f000" stroke-width="0.9"/>
<rect x="314.43" y="272.50" width="3.36" height="7.00" fill="#ffffff" stroke="#00f000" stroke-width="0.84"/>
<line x1="322.87" y1="273.75" x2="322.87" y2="302.00" stroke="#00f000" stroke-width="0.9"/>
<rect x="321.19" y="280.75" width="3.36" height="5.50" fill="#ffffff" stroke="#00f000" stroke-width="0.84"/>
<line x1="329.62" y1="266.25" x2="329.62" y2="292.00" stroke="#00f000" stroke-width="0.9"/>
<rect x="327.94" y="267.50" width="3.36" height="18.25" fill="#000000" stroke="#00f000" stroke-width="0.84"/>
<line x1="336.37" y1="223.75" x2="336.37" y2="268.25" stroke="#00f000" stroke-width="0.9"/>
<rect x="334.69" y="241.25" width="3.36" height="25.50" fill="#000000" stroke="#00f000" stroke-width="0.84"/>
<line x1="343.12" y1="219.50" x2="343.12" y2="250.50" stroke="#00f000" stroke-width="0.9"/>
<rect x="341.44" y="240.75" width="3.36" height="2.50" fill="#ffffff" stroke="#00f000" stroke-width="0.84"/>
<line x1="349.88" y1="223.00" x2="349.88" y2="262.00" stroke="#00f000" stroke-width="0.9"/>
<rect x="348.20" y="228.25" width="3.36" height="15.00" fill="#000000" stroke="#00f000" stroke-width="0.84"/>
<line x1="356.63" y1="200.00" x2="356.63" y2="251.25" stroke="#00f000" stroke-width="0.9"/>
<rect x="354.95" y="229.50" width="3.36" height="3.75" fill="#ffffff" stroke="#00f000" stroke-width="0.84"/>
<line x1="363.38" y1="232.00" x2="363.38" y2="271.25" stroke="#00f000" stroke-width="0.9"/>
<rect x="361.70" y="233.25" width="3.36" height="35.50" fill="#ffffff" stroke="#00f000" stroke-width="0.84"/>
<line x1="370.13" y1="239.25" x2="370.13" y2="287.50" stroke="#00f000" stroke-width="0.9"/>
<rect x="368.45" y="268.25" width="3.36" height="18.50" fill="#ffffff" stroke="#00f000" stroke-width="0.84"/>
<line x1="376.89" y1="273.00" x2="376.89" y2="302.00" stroke="#00f000" stroke-width="0.9"/>
<rect x="375.21" y="277.50" width="3.36" height="10.00" fill="#000000" stroke="#00f000" stroke-width="0.84"/>
<line x1="383.64" y1="275.00" x2="383.64" y2="301.25" stroke="#00f000" stroke-width="0.9"/>
<rect x="381.96" y="277.50" width="3.36" height="8.00" fill="#ffffff" stroke="#00f000" stroke-width="0.84"/>
<line x1="390.39" y1="277.50" x2="390.39" y2="334.25" stroke="#00f000" stroke-width="0.9"/>
<rect x="388.71" y="285.00" width="3.36" height="47.00" fill="#ffffff" stroke="#00f000" stroke-width="0.84"/>
<line x1="397.15" y1="289.25" x2="397.15" y2="330.00" stroke="#00f000" stroke-width="0.9"/>
<rect x="395.47" y="328.00" width="3.36" height="2.00" fill="#000000" stroke="#00f000" stroke-width="0.84"/>
<line x1="403.90" y1="316.25" x2="403.90" y2="386.00" stroke="#00f000" stroke-width="0.9"/>
<rect x="402.22" y="328.25" width="3.36" height="53.00" fill="#ffffff" stroke="#00f000" stroke-width="0.84"/>
<line x1="410.65" y1="381.25" x2="410.65" y2="465.00" stroke="#00f000" stroke-width="0.9"/>
<rect x="408.97" y="381.25" width="3.36" height="82.00" fill="#ffffff" stroke="#00f000" stroke-width="0.84"/>
<line x1="417.40" y1="437.50" x2="417.40" y2="482.50" stroke="#00f000" stroke-width="0.9"/>
<rect x="415.72" y="460.00" width="3.36" height="5.75" fill="#ffffff" stroke="#00f000" stroke-width="0.84"/>
<line x1="424.16" y1="441.25" x2="424.16" y2="477.00" stroke="#00f000" stroke-width="0.9"/>
<rect x="422.48" y="458.25" width="3.36" height="6.75" fill="#000000" stroke="#00f000" stroke-width="0.84"/>
<line x1="430.91" y1="417.50" x2="430.91" y2="457.50" stroke="#00f000" stroke-width="0.9"/>
<rect x="429.23" y="431.25" width="3.36" height="26.25" fill="#000000" stroke="#00f000" stroke-width="0.84"/>
<line x1="437.66" y1="415.00" x2="437.66" y2="458.75" stroke="#00f000" stroke-width="0.9"/>
<rect x="435.98" y="430.50" width="3.36" height="15.00" fill="#ffffff" stroke="#00f000" stroke-width="0.84"/>
<line x1="444.41" y1="426.25" x2="444.41" y2="490.00" stroke="#00f000" stroke-width="0.9"/>
<rect x="442.73" y="445.50" width="3.36" height="37.00" fill="#ffffff" stroke="#00f000" stroke-width="0.84"/>
<line x1="451.17" y1="418.25" x2="451.17" y2="488.00" stroke="#00f000" stroke-width="0.9"/>
<rect x="449.49" y="418.25" width="3.36" height="64.25" fill="#000000" stroke="#00f000" stroke-width="0.84"/>
<line x1="457.92" y1="364.25" x2="457.92" y2="418.00" stroke="#00f000" stroke-width="0.9"/>
<rect x="456.24" y="369.25" width="3.36" height="48.75" fill="#000000" stroke="#00f000" stroke-width="0.84"/>
<line x1="464.67" y1="330.50" x2="464.67" y2="376.25" stroke="#00f000" stroke-width="0.9"/>
<rect x="462.99" y="337.50" width="3.36" height="33.75" fill="#000000" stroke="#00f000" stroke-width="0.84"/>
<line x1="471.43" y1="307.00" x2="471.43" y2="353.75" stroke="#00f000" stroke-width="0.9"/>
<rect x="469.75" y="335.50" width="3.36" height="5.25" fill="#ffffff" stroke="#00f000" stroke-width="0.84"/>
<line x1="478.18" y1="335.00" x2="478.18" y2="370.75" stroke="#00f000" stroke-width="0.9"/>
<line x1="476.08" y1="341.25" x2="480.28" y2="341.25" stroke="#00f000" stroke-width="0.9"/>
<line x1="484.93" y1="315.75" x2="484.93" y2="348.75" stroke="#00f000" stroke-width="0.9"/>
<rect x="483.25" y="316.75" width="3.36" height="20.00" fill="#000000" stroke="#00f000" stroke-width="0.84"/>
<line x1="491.68" y1="275.00" x2="491.68" y2="341.00" stroke="#00f000" stroke-width="0.9"/>
<rect x="490.00" y="279.25" width="3.36" height="39.00" fill="#000000" stroke="#00f000" stroke-width="0.84"/>
<line x1="498.44" y1="273.75" x2="498.44" y2="295.75" stroke="#00f000" stroke-width="0.9"/>
<rect x="496.76" y="278.75" width="3.36" height="2.00" fill="#ffffff" stroke="#00f000" stroke-width="0.84"/>
<line x1="505.19" y1="234.25" x2="505.19" y2="280.75" stroke="#00f000" stroke-width="0.9"/>
<rect x="503.51" y="238.25" width="3.36" height="42.50" fill="#000000" stroke="#00f000" stroke-width="0.84"/>
<line x1="511.94" y1="202.50" x2="511.94" y2="247.00" stroke="#00f000" stroke-width="0.9"/>
<rect x="510.26" y="206.25" width="3.36" height="30.75" fill="#000000" stroke="#00f000" stroke-width="0.84"/>
<line x1="518.69" y1="173.75" x2="518.69" y2="210.00" stroke="#00f000" stroke-width="0.9"/>
<rect x="517.01" y="207.50" width="3.36" height="1.75" fill="#000000" stroke="#00f000" stroke-width="0.84"/>
<line x1="525.45" y1="187.50" x2="525.45" y2="216.25" stroke="#00f000" stroke-width="0.9"/>
<rect x="523.77" y="208.75" width="3.36" height="2.50" fill="#ffffff" stroke="#00f000" stroke-width="0.84"/>
<line x1="532.20" y1="178.00" x2="532.20" y2="212.50" stroke="#00f000" stroke-width="0.9"/>
<rect x="530.52" y="183.25" width="3.36" height="27.25" fill="#000000" stroke="#00f000" stroke-width="0.84"/>
<line x1="538.95" y1="183.75" x2="538.95" y2="245.50" stroke="#00f000" stroke-width="0.9"/>
<rect x="537.27" y="183.75" width="3.36" height="46.25" fill="#ffffff" stroke="#00f000" stroke-width="0.84"/>
<line x1="545.71" y1="225.50" x2="545.71" y2="268.25" stroke="#00f000" stroke-width="0.9"/>
<rect x="544.03" y="230.75" width="3.36" height="33.00" fill="#ffffff" stroke="#00f000" stroke-width="0.84"/>
<line x1="552.46" y1="247.50" x2="552.46" y2="274.50" stroke="#00f000" stroke-width="0.9"/>
<rect x="550.78" y="254.50" width="3.36" height="9.25" fill="#000000" stroke="#00f000" stroke-width="0.84"/>
<line x1="559.21" y1="243.25" x2="559.21" y2="268.25" stroke="#00f000" stroke-width="0.9"/>
<rect x="557.53" y="253.75" width="3.36" height="5.00" fill="#ffffff" stroke="#00f000" stroke-width="0.84"/>
<line x1="565.96" y1="258.75" x2="565.96" y2="280.00" stroke="#00f000" stroke-width="0.9"/>
<rect x="564.28" y="259.50" width="3.36" height="6.00" fill="#ffffff" stroke="#00f000" stroke-width="0.84"/>
<line x1="572.72" y1="256.25" x2="572.72" y2="287.50" stroke="#00f000" stroke-width="0.9"/>
<rect x="571.04" y="257.50" width="3.36" height="10.50" fill="#000000" stroke="#00f000" stroke-width="0.84"/>
<line x1="579.47" y1="189.25" x2="579.47" y2="260.50" stroke="#00f000" stroke-width="0.9"/>
<rect x="577.79" y="209.50" width="3.36" height="48.75" fill="#000000" stroke="#00f000" stroke-width="0.84"/>
<line x1="586.22" y1="199.50" x2="586.22" y2="228.75" stroke="#00f000" stroke-width="0.9"/>
<rect x="584.54" y="209.50" width="3.36" height="3.00" fill="#ffffff" stroke="#00f000" stroke-width="0.84"/>
<line x1="592.97" y1="192.00" x2="592.97" y2="233.75" stroke="#00f000" stroke-width="0.9"/>
<rect x="591.29" y="213.00" width="3.36" height="4.50" fill="#ffffff" stroke="#00f000" stroke-width="0.84"/>
<line x1="599.73" y1="214.50" x2="599.73" y2="245.75" stroke="#00f000" stroke-width="0.9"/>
<rect x="598.05" y="218.00" width="3.36" height="17.50" fill="#ffffff" stroke="#00f000" stroke-width="0.84"/>
<line x1="606.48" y1="225.00" x2="606.48" y2="299.50" stroke="#00f000" stroke-width="0.9"/>
<rect x="604.80" y="234.25" width="3.36" height="62.50" fill="#ffffff" stroke="#00f000" stroke-width="0.84"/>
<line x1="613.23" y1="254.25" x2="613.23" y2="297.50" stroke="#00f000" stroke-width="0.9"/>
<rect x="611.55" y="280.50" width="3.36" height="16.25" fill="#000000" stroke="#00f000" stroke-width="0.84"/>
<line x1="619.98" y1="273.75" x2="619.98" y2="305.00" stroke="#00f000" stroke-width="0.9"/>
<rect x="618.30" y="276.25" width="3.36" height="5.50" fill="#ffffff" stroke="#00f000" stroke-width="0.84"/>
<line x1="626.74" y1="275.00" x2="626.74" y2="297.50" stroke="#00f000" stroke-width="0.9"/>
<rect x="625.06" y="279.25" width="3.36" height="2.50" fill="#000000" stroke="#00f000" stroke-width="0.84"/>
<line x1="633.49" y1="277.50" x2="633.49" y2="308.00" stroke="#00f000" stroke-width="0.9"/>
<rect x="631.81" y="280.50" width="3.36" height="14.50" fill="#ffffff" stroke="#00f000" stroke-width="0.84"/>
<line x1="640.24" y1="277.00" x2="640.24" y2="299.50" stroke="#00f000" stroke-width="0.9"/>
<line x1="638.14" y1="295.75" x2="642.34" y2="295.75" stroke="#00f000" stroke-width="0.9"/>
<line x1="647.00" y1="276.25" x2="647.00" y2="312.00" stroke="#00f000" stroke-width="0.9"/>
<rect x="645.32" y="295.75" width="3.36" height="14.75" fill="#ffffff" stroke="#00f000" stroke-width="0.84"/>
<line x1="653.75" y1="263.75" x2="653.75" y2="313.75" stroke="#00f000" stroke-width="0.9"/>
<rect x="652.07" y="264.50" width="3.36" height="45.00" fill="#000000" stroke="#00f000" stroke-width="0.84"/>
<line x1="660.50" y1="263.00" x2="660.50" y2="312.50" stroke="#00f000" stroke-width="0.9"/>
<rect x="658.82" y="263.00" width="3.36" height="27.50" fill="#ffffff" stroke="#00f000" stroke-width="0.84"/>
<line x1="667.25" y1="257.50" x2="667.25" y2="296.25" stroke="#00f000" stroke-width="0.9"/>
<rect x="665.57" y="275.00" width="3.36" height="16.75" fill="#000000" stroke="#00f000" stroke-width="0.84"/>
<line x1="674.01" y1="281.50" x2="674.01" y2="356.25" stroke="#00f000" stroke-width="0.9"/>
<rect x="672.33" y="282.50" width="3.36" height="73.75" fill="#ffffff" stroke="#00f000" stroke-width="0.84"/>
<line x1="680.76" y1="319.50" x2="680.76" y2="366.25" stroke="#00f000" stroke-width="0.9"/>
<rect x="679.08" y="328.00" width="3.36" height="29.00" fill="#000000" stroke="#00f000" stroke-width="0.84"/>
<line x1="687.51" y1="300.00" x2="687.51" y2="328.75" stroke="#00f000" stroke-width="0.9"/>
<rect x="685.83" y="316.25" width="3.36" height="11.75" fill="#000000" stroke="#00f000" stroke-width="0.84"/>
<line x1="694.26" y1="318.00" x2="694.26" y2="342.00" stroke="#00f000" stroke-width="0.9"/>
<rect x="692.58" y="318.00" width="3.36" height="6.50" fill="#ffffff" stroke="#00f000" stroke-width="0.84"/>
<line x1="701.02" y1="321.25" x2="701.02" y2="335.50" stroke="#00f000" stroke-width="0.9"/>
<rect x="699.34" y="321.25" width="3.36" height="13.25" fill="#ffffff" stroke="#00f000" stroke-width="0.84"/>
<line x1="707.77" y1="327.50" x2="707.77" y2="387.50" stroke="#00f000" stroke-width="0.9"/>
<rect x="706.09" y="333.75" width="3.36" height="48.25" fill="#ffffff" stroke="#00f000" stroke-width="0.84"/>
<line x1="714.52" y1="382.00" x2="714.52" y2="413.25" stroke="#00f000" stroke-width="0.9"/>
<rect x="712.84" y="382.00" width="3.36" height="25.50" fill="#ffffff" stroke="#00f000" stroke-width="0.84"/>
<line x1="721.28" y1="355.00" x2="721.28" y2="415.00" stroke="#00f000" stroke-width="0.9"/>
<rect x="719.60" y="355.00" width="3.36" height="52.00" fill="#000000" stroke="#00f000" stroke-width="0.84"/>
<line x1="728.03" y1="354.50" x2="728.03" y2="380.50" stroke="#00f000" stroke-width="0.9"/>
<rect x="726.35" y="354.50" width="3.36" height="25.50" fill="#ffffff" stroke="#00f000" stroke-width="0.84"/>
<line x1="734.78" y1="381.25" x2="734.78" y2="402.00" stroke="#00f000" stroke-width="0.9"/>
<rect x="733.10" y="382.00" width="3.36" height="19.25" fill="#ffffff" stroke="#00f000" stroke-width="0.84"/>
<line x1="741.53" y1="395.00" x2="741.53" y2="414.50" stroke="#00f000" stroke-width="0.9"/>
<rect x="739.85" y="400.00" width="3.36" height="2.50" fill="#ffffff" stroke="#00f000" stroke-width="0.84"/>
<line x1="748.29" y1="385.00" x2="748.29" y2="411.25" stroke="#00f000" stroke-width="0.9"/>
<rect x="746.61" y="387.00" width="3.36" height="11.25" fill="#000000" stroke="#00f000" stroke-width="0.84"/>
<line x1="755.04" y1="382.50" x2="755.04" y2="400.00" stroke="#00f000" stroke-width="0.9"/>
<rect x="753.36" y="388.25" width="3.36" height="2.25" fill="#ffffff" stroke="#00f000" stroke-width="0.84"/>
<line x1="761.79" y1="386.25" x2="761.79" y2="418.75" stroke="#00f000" stroke-width="0.9"/>
<rect x="760.11" y="388.75" width="3.36" height="24.25" fill="#ffffff" stroke="#00f000" stroke-width="0.84"/>
<line x1="768.54" y1="410.00" x2="768.54" y2="426.25" stroke="#00f000" stroke-width="0.9"/>
<line x1="766.44" y1="412.50" x2="770.64" y2="412.50" stroke="#00f000" stroke-width="0.9"/>
<line x1="775.30" y1="341.25" x2="775.30" y2="416.25" stroke="#00f000" stroke-width="0.9"/>
<rect x="773.62" y="344.50" width="3.36" height="69.25" fill="#000000" stroke="#00f000" stroke-width="0.84"/>
<line x1="782.05" y1="311.25" x2="782.05" y2="348.00" stroke="#00f000" stroke-width="0.9"/>
<rect x="780.37" y="317.50" width="3.36" height="30.00" fill="#000000" stroke="#00f000" stroke-width="0.84"/>
<line x1="788.80" y1="310.00" x2="788.80" y2="328.75" stroke="#00f000" stroke-width="0.9"/>
<rect x="787.12" y="318.75" width="3.36" height="5.75" fill="#ffffff" stroke="#00f000" stroke-width="0.84"/>
<line x1="795.56" y1="322.50" x2="795.56" y2="348.75" stroke="#00f000" stroke-width="0.9"/>
<rect x="793.88" y="324.50" width="3.36" height="16.25" fill="#ffffff" stroke="#00f000" stroke-width="0.84"/>
<line x1="802.31" y1="335.75" x2="802.31" y2="375.75" stroke="#00f000" stroke-width="0.9"/>
<rect x="800.63" y="341.25" width="3.36" height="30.75" fill="#ffffff" stroke="#00f000" stroke-width="0.84"/>
<line x1="809.06" y1="368.75" x2="809.06" y2="398.00" stroke="#00f000" stroke-width="0.9"/>
<rect x="807.38" y="371.25" width="3.36" height="5.00" fill="#ffffff" stroke="#00f000" stroke-width="0.84"/>
<line x1="815.81" y1="375.00" x2="815.81" y2="393.00" stroke="#00f000" stroke-width="0.9"/>
<rect x="814.13" y="376.25" width="3.36" height="4.25" fill="#ffffff" stroke="#00f000" stroke-width="0.84"/>
<line x1="822.57" y1="368.75" x2="822.57" y2="387.50" stroke="#00f000" stroke-width="0.9"/>
<rect x="820.89" y="370.50" width="3.36" height="10.75" fill="#000000" stroke="#00f000" stroke-width="0.84"/>
<line x1="829.32" y1="350.00" x2="829.32" y2="380.50" stroke="#00f000" stroke-width="0.9"/>
<rect x="827.64" y="353.25" width="3.36" height="20.50" fill="#000000" stroke="#00f000" stroke-width="0.84"/>
<line x1="836.07" y1="338.25" x2="836.07" y2="355.50" stroke="#00f000" stroke-width="0.9"/>
<rect x="834.39" y="343.00" width="3.36" height="9.50" fill="#000000" stroke="#00f000" stroke-width="0.84"/>
<line x1="842.82" y1="315.00" x2="842.82" y2="352.00" stroke="#00f000" stroke-width="0.9"/>
<rect x="841.14" y="317.00" width="3.36" height="26.75" fill="#000000" stroke="#00f000" stroke-width="0.84"/>
<line x1="849.58" y1="317.00" x2="849.58" y2="362.00" stroke="#00f000" stroke-width="0.9"/>
<rect x="847.90" y="317.00" width="3.36" height="26.75" fill="#ffffff" stroke="#00f000" stroke-width="0.84"/>
<line x1="856.33" y1="343.75" x2="856.33" y2="354.50" stroke="#00f000" stroke-width="0.9"/>
<rect x="854.65" y="344.50" width="3.36" height="5.00" fill="#ffffff" stroke="#00f000" stroke-width="0.84"/>
<line x1="863.08" y1="347.50" x2="863.08" y2="371.25" stroke="#00f000" stroke-width="0.9"/>
<rect x="861.40" y="349.50" width="3.36" height="4.75" fill="#ffffff" stroke="#00f000" stroke-width="0.84"/>
<line x1="869.83" y1="337.00" x2="869.83" y2="361.25" stroke="#00f000" stroke-width="0.9"/>
<rect x="868.15" y="352.50" width="3.36" height="3.75" fill="#000000" stroke="#00f000" stroke-width="0.84"/>
<line x1="876.59" y1="350.00" x2="876.59" y2="363.25" stroke="#00f000" stroke-width="0.9"/>
<rect x="874.91" y="353.25" width="3.36" height="9.25" fill="#ffffff" stroke="#00f000" stroke-width="0.84"/>
<line x1="883.34" y1="359.50" x2="883.34" y2="384.50" stroke="#00f000" stroke-width="0.9"/>
<rect x="881.66" y="360.00" width="3.36" height="2.50" fill="#000000" stroke="#00f000" stroke-width="0.84"/>
<line x1="890.09" y1="343.75" x2="890.09" y2="375.75" stroke="#00f000" stroke-width="0.9"/>
<rect x="888.41" y="356.25" width="3.36" height="10.00" fill="#ffffff" stroke="#00f000" stroke-width="0.84"/>
<line x1="896.85" y1="356.25" x2="896.85" y2="371.25" stroke="#00f000" stroke-width="0.9"/>
<rect x="895.17" y="360.00" width="3.36" height="6.25" fill="#000000" stroke="#00f000" stroke-width="0.84"/>
<line x1="903.60" y1="328.00" x2="903.60" y2="365.00" stroke="#00f000" stroke-width="0.9"/>
<rect x="901.92" y="329.50" width="3.36" height="29.75" fill="#000000" stroke="#00f000" stroke-width="0.84"/>
<line x1="910.35" y1="328.75" x2="910.35" y2="400.00" stroke="#00f000" stroke-width="0.9"/>
<rect x="908.67" y="328.75" width="3.36" height="50.50" fill="#ffffff" stroke="#00f000" stroke-width="0.84"/>
<line x1="917.10" y1="375.08" x2="917.10" y2="400.20" stroke="#00f000" stroke-width="0.9"/>
<rect x="915.42" y="378.84" width="3.36" height="8.17" fill="#ffffff" stroke="#00f000" stroke-width="0.84"/>
<line x1="923.86" y1="366.91" x2="923.86" y2="394.55" stroke="#00f000" stroke-width="0.9"/>
<rect x="922.18" y="385.50" width="3.36" height="2.39" fill="#000000" stroke="#00f000" stroke-width="0.84"/>
<line x1="930.61" y1="385.13" x2="930.61" y2="411.26" stroke="#00f000" stroke-width="0.9"/>
<rect x="928.93" y="385.75" width="3.36" height="22.61" fill="#ffffff" stroke="#00f000" stroke-width="0.84"/>
<line x1="937.36" y1="409.62" x2="937.36" y2="436.63" stroke="#00f000" stroke-width="0.9"/>
<rect x="935.68" y="410.00" width="3.36" height="23.49" fill="#ffffff" stroke="#00f000" stroke-width="0.84"/>
<line x1="944.11" y1="411.26" x2="944.11" y2="444.67" stroke="#00f000" stroke-width="0.9"/>
<rect x="942.43" y="411.26" width="3.36" height="22.24" fill="#000000" stroke="#00f000" stroke-width="0.84"/>
<line x1="950.87" y1="396.43" x2="950.87" y2="427.84" stroke="#00f000" stroke-width="0.9"/>
<rect x="949.19" y="403.34" width="3.36" height="10.05" fill="#000000" stroke="#00f000" stroke-width="0.84"/>
<line x1="957.62" y1="394.92" x2="957.62" y2="415.65" stroke="#00f000" stroke-width="0.9"/>
<line x1="955.52" y1="404.35" x2="959.72" y2="404.35" stroke="#00f000" stroke-width="0.9"/>
<line x1="964.37" y1="378.22" x2="964.37" y2="406.86" stroke="#00f000" stroke-width="0.9"/>
<rect x="962.69" y="399.32" width="3.36" height="7.54" fill="#000000" stroke="#00f000" stroke-width="0.84"/>
<rect x="797.00" y="400.30" width="126.60" height="84.70" fill="#ff0000"/>
<text x="826.20" y="451.00" font-size="22.3" fill="#ffffff" font-family="'Liberation Sans','Noto Sans CJK JP',sans-serif" textLength="67.60" lengthAdjust="spacingAndGlyphs">全決済</text>
<line x1="4.60" y1="92.60" x2="983.07" y2="92.60" stroke="#e8e8e8" stroke-width="0.9"/>
<line x1="4.60" y1="92.60" x2="4.60" y2="502.40" stroke="#e8e8e8" stroke-width="0.9"/>
<line x1="4.60" y1="502.40" x2="983.07" y2="502.40" stroke="#e8e8e8" stroke-width="0.9"/>
<line x1="983.07" y1="92.60" x2="983.07" y2="502.40" stroke="#e8e8e8" stroke-width="0.9"/>
</g>
<line x1="983.07" y1="108.48" x2="985.67" y2="108.48" stroke="#e8e8e8" stroke-width="0.9"/>
<text x="988.00" y="110.98" font-size="7.90" fill="#ffffff" textLength="27.40" lengthAdjust="spacingAndGlyphs">4095.90</text>
<line x1="983.07" y1="136.50" x2="985.67" y2="136.50" stroke="#e8e8e8" stroke-width="0.9"/>
<text x="988.00" y="139.00" font-size="7.90" fill="#ffffff" textLength="27.40" lengthAdjust="spacingAndGlyphs">4094.40</text>
<line x1="983.07" y1="164.50" x2="985.67" y2="164.50" stroke="#e8e8e8" stroke-width="0.9"/>
<text x="988.00" y="167.00" font-size="7.90" fill="#ffffff" textLength="27.40" lengthAdjust="spacingAndGlyphs">4092.90</text>
<line x1="983.07" y1="192.55" x2="985.67" y2="192.55" stroke="#e8e8e8" stroke-width="0.9"/>
<text x="988.00" y="195.05" font-size="7.90" fill="#ffffff" textLength="27.40" lengthAdjust="spacingAndGlyphs">4091.40</text>
<line x1="983.07" y1="220.55" x2="985.67" y2="220.55" stroke="#e8e8e8" stroke-width="0.9"/>
<text x="988.00" y="223.05" font-size="7.90" fill="#ffffff" textLength="27.40" lengthAdjust="spacingAndGlyphs">4089.90</text>
<line x1="983.07" y1="248.58" x2="985.67" y2="248.58" stroke="#e8e8e8" stroke-width="0.9"/>
<text x="988.00" y="251.08" font-size="7.90" fill="#ffffff" textLength="27.40" lengthAdjust="spacingAndGlyphs">4088.40</text>
<line x1="983.07" y1="276.50" x2="985.67" y2="276.50" stroke="#e8e8e8" stroke-width="0.9"/>
<text x="988.00" y="279.00" font-size="7.90" fill="#ffffff" textLength="27.40" lengthAdjust="spacingAndGlyphs">4086.90</text>
<line x1="983.07" y1="304.40" x2="985.67" y2="304.40" stroke="#e8e8e8" stroke-width="0.9"/>
<text x="988.00" y="306.90" font-size="7.90" fill="#ffffff" textLength="27.40" lengthAdjust="spacingAndGlyphs">4085.40</text>
<line x1="983.07" y1="332.35" x2="985.67" y2="332.35" stroke="#e8e8e8" stroke-width="0.9"/>
<text x="988.00" y="334.85" font-size="7.90" fill="#ffffff" textLength="27.40" lengthAdjust="spacingAndGlyphs">4083.90</text>
<line x1="983.07" y1="360.30" x2="985.67" y2="360.30" stroke="#e8e8e8" stroke-width="0.9"/>
<text x="988.00" y="362.80" font-size="7.90" fill="#ffffff" textLength="27.40" lengthAdjust="spacingAndGlyphs">4082.40</text>
<line x1="983.07" y1="388.19" x2="985.67" y2="388.19" stroke="#e8e8e8" stroke-width="0.9"/>
<text x="988.00" y="390.69" font-size="7.90" fill="#ffffff" textLength="27.40" lengthAdjust="spacingAndGlyphs">4080.90</text>
<line x1="983.07" y1="416.00" x2="985.67" y2="416.00" stroke="#e8e8e8" stroke-width="0.9"/>
<text x="988.00" y="418.50" font-size="7.90" fill="#ffffff" textLength="27.40" lengthAdjust="spacingAndGlyphs">4079.40</text>
<line x1="983.07" y1="443.85" x2="985.67" y2="443.85" stroke="#e8e8e8" stroke-width="0.9"/>
<text x="988.00" y="446.35" font-size="7.90" fill="#ffffff" textLength="27.40" lengthAdjust="spacingAndGlyphs">4077.90</text>
<line x1="983.07" y1="471.65" x2="985.67" y2="471.65" stroke="#e8e8e8" stroke-width="0.9"/>
<text x="988.00" y="474.15" font-size="7.90" fill="#ffffff" textLength="27.40" lengthAdjust="spacingAndGlyphs">4076.40</text>
<line x1="983.07" y1="499.45" x2="985.67" y2="499.45" stroke="#e8e8e8" stroke-width="0.9"/>
<text x="988.00" y="501.95" font-size="7.90" fill="#ffffff" textLength="27.40" lengthAdjust="spacingAndGlyphs">4074.90</text>
<rect x="984.60" y="394.50" width="34.30" height="9.20" fill="#ffffff"/>
<text x="988.00" y="401.90" font-size="7.90" fill="#000000" textLength="27.40" lengthAdjust="spacingAndGlyphs">4080.33</text>
<line x1="5.40" y1="502.40" x2="5.40" y2="505.60" stroke="#e8e8e8" stroke-width="0.9"/>
<text x="4.60" y="512.30" font-size="7.90" fill="#ffffff" textLength="45.30" lengthAdjust="spacingAndGlyphs">14 Nov 2025</text>
<line x1="59.45" y1="502.40" x2="59.45" y2="505.60" stroke="#e8e8e8" stroke-width="0.9"/>
<text x="58.65" y="512.30" font-size="7.90" fill="#ffffff" textLength="47.00" lengthAdjust="spacingAndGlyphs">14 Nov 21:29</text>
<line x1="113.50" y1="502.40" x2="113.50" y2="505.60" stroke="#e8e8e8" stroke-width="0.9"/>
<text x="112.70" y="512.30" font-size="7.90" fill="#ffffff" textLength="47.00" lengthAdjust="spacingAndGlyphs">14 Nov 21:37</text>
<line x1="167.56" y1="502.40" x2="167.56" y2="505.60" stroke="#e8e8e8" stroke-width="0.9"/>
<text x="166.76" y="512.30" font-size="7.90" fill="#ffffff" textLength="47.00" lengthAdjust="spacingAndGlyphs">14 Nov 21:45</text>
<line x1="221.61" y1="502.40" x2="221.61" y2="505.60" stroke="#e8e8e8" stroke-width="0.9"/>
<text x="220.81" y="512.30" font-size="7.90" fill="#ffffff" textLength="47.00" lengthAdjust="spacingAndGlyphs">14 Nov 21:53</text>
<line x1="275.66" y1="502.40" x2="275.66" y2="505.60" stroke="#e8e8e8" stroke-width="0.9"/>
<text x="274.86" y="512.30" font-size="7.90" fill="#ffffff" textLength="47.00" lengthAdjust="spacingAndGlyphs">14 Nov 22:01</text>
<line x1="329.71" y1="502.40" x2="329.71" y2="505.60" stroke="#e8e8e8" stroke-width="0.9"/>
<text x="328.91" y="512.30" font-size="7.90" fill="#ffffff" textLength="47.00" lengthAdjust="spacingAndGlyphs">14 Nov 22:09</text>
<line x1="383.76" y1="502.40" x2="383.76" y2="505.60" stroke="#e8e8e8" stroke-width="0.9"/>
<text x="382.96" y="512.30" font-size="7.90" fill="#ffffff" textLength="47.00" lengthAdjust="spacingAndGlyphs">14 Nov 22:17</text>
<line x1="437.82" y1="502.40" x2="437.82" y2="505.60" stroke="#e8e8e8" stroke-width="0.9"/>
<text x="437.02" y="512.30" font-size="7.90" fill="#ffffff" textLength="47.00" lengthAdjust="spacingAndGlyphs">14 Nov 22:25</text>
<line x1="491.87" y1="502.40" x2="491.87" y2="505.60" stroke="#e8e8e8" stroke-width="0.9"/>
<text x="491.07" y="512.30" font-size="7.90" fill="#ffffff" textLength="47.00" lengthAdjust="spacingAndGlyphs">14 Nov 22:33</text>
<line x1="545.92" y1="502.40" x2="545.92" y2="505.60" stroke="#e8e8e8" stroke-width="0.9"/>
<text x="545.12" y="512.30" font-size="7.90" fill="#ffffff" textLength="47.00" lengthAdjust="spacingAndGlyphs">14 Nov 22:41</text>
<line x1="599.97" y1="502.40" x2="599.97" y2="505.60" stroke="#e8e8e8" stroke-width="0.9"/>
<text x="599.17" y="512.30" font-size="7.90" fill="#ffffff" textLength="47.00" lengthAdjust="spacingAndGlyphs">14 Nov 22:49</text>
<line x1="654.02" y1="502.40" x2="654.02" y2="505.60" stroke="#e8e8e8" stroke-width="0.9"/>
<text x="653.22" y="512.30" font-size="7.90" fill="#ffffff" textLength="47.00" lengthAdjust="spacingAndGlyphs">14 Nov 22:57</text>
<line x1="708.08" y1="502.40" x2="708.08" y2="505.60" stroke="#e8e8e8" stroke-width="0.9"/>
<text x="707.28" y="512.30" font-size="7.90" fill="#ffffff" textLength="47.00" lengthAdjust="spacingAndGlyphs">14 Nov 23:05</text>
<line x1="762.13" y1="502.40" x2="762.13" y2="505.60" stroke="#e8e8e8" stroke-width="0.9"/>
<text x="761.33" y="512.30" font-size="7.90" fill="#ffffff" textLength="47.00" lengthAdjust="spacingAndGlyphs">14 Nov 23:13</text>
<line x1="816.18" y1="502.40" x2="816.18" y2="505.60" stroke="#e8e8e8" stroke-width="0.9"/>
<text x="815.38" y="512.30" font-size="7.90" fill="#ffffff" textLength="47.00" lengthAdjust="spacingAndGlyphs">14 Nov 23:21</text>
<line x1="870.23" y1="502.40" x2="870.23" y2="505.60" stroke="#e8e8e8" stroke-width="0.9"/>
<text x="869.43" y="512.30" font-size="7.90" fill="#ffffff" textLength="47.00" lengthAdjust="spacingAndGlyphs">14 Nov 23:29</text>
<line x1="924.28" y1="502.40" x2="924.28" y2="505.60" stroke="#e8e8e8" stroke-width="0.9"/>
<text x="923.48" y="512.30" font-size="7.90" fill="#ffffff" textLength="47.00" lengthAdjust="spacingAndGlyphs">14 Nov 23:37</text>
<path d="M7.4 98.0 L13.8 98.0 L10.6 101.8 Z" fill="#ffffff"/>
<text x="18.00" y="102.00" font-size="7.90" fill="#ffffff" textLength="53.00" lengthAdjust="spacingAndGlyphs">GOLDmicro,M1</text>
<text x="77.00" y="102.00" font-size="7.90" fill="#ffffff" textLength="118.80" lengthAdjust="spacingAndGlyphs">4079.92 4081.39 4079.92 4080.33</text>
<text x="8.60" y="113.00" font-size="7.9" fill="#ffffff" font-family="'Liberation Sans','Noto Sans CJK JP',sans-serif" textLength="106.90" lengthAdjust="spacingAndGlyphs">プログラムは正常に動作しています。</text>
<text x="8.60" y="123.40" font-size="7.9" fill="#ffffff" font-family="'Liberation Sans','Noto Sans CJK JP',sans-serif" textLength="33.00" lengthAdjust="spacingAndGlyphs">有効期限:</text>
<text x="44.30" y="123.30" font-size="7.90" fill="#ffffff" textLength="71.20" lengthAdjust="spacingAndGlyphs">2100.12.31 23:59:59</text>
<text x="8.60" y="133.40" font-size="7.9" fill="#ffffff" font-family="'Liberation Sans','Noto Sans CJK JP',sans-serif" textLength="33.00" lengthAdjust="spacingAndGlyphs">次回認証:</text>
<text x="44.30" y="133.30" font-size="7.90" fill="#ffffff" textLength="71.20" lengthAdjust="spacingAndGlyphs">2025.11.15 05:09:12</text>
<text x="923.00" y="102.50" font-size="7.90" fill="#ffffff" textLength="44.00" lengthAdjust="spacingAndGlyphs">GoldenSurge</text>
<g fill="none" stroke="#ffffff" stroke-width="0.8"><circle cx="973.7" cy="100.6" r="4.5"/><path d="M971.3 101.7 Q973.7 104.5 976.1 101.7"/></g><circle cx="972.2" cy="99.3" r="0.75" fill="#fff"/><circle cx="975.2" cy="99.3" r="0.75" fill="#fff"/>
<path d="M10.4 386.2 l2.4 -1.8 v1.2 h3 v1.2 h-3 v1.2 z" fill="#e8e8e8"/>
<path d="M9.6 415.8 l1.4 -3 1.4 3 z" fill="#20306a"/>
<text x="48.40" y="383.40" font-size="7.90" fill="#d0d0d0" textLength="28.60" lengthAdjust="spacingAndGlyphs">sell 0.06</text>
<text x="48.40" y="390.20" font-size="7.90" fill="#d0d0d0" textLength="30.50" lengthAdjust="spacingAndGlyphs">buy 0.04</text>
<text x="48.40" y="415.40" font-size="7.90" fill="#d0d0d0" textLength="28.60" lengthAdjust="spacingAndGlyphs">sell 0.04</text>
<defs><linearGradient id="lg1" x1="0" y1="0" x2="0" y2="1"><stop offset="0" stop-color="#eef1f5"/><stop offset="0.3" stop-color="#d3e1ef"/><stop offset="1" stop-color="#c3d7eb"/></linearGradient></defs>
<rect x="1.00" y="534.00" width="11.40" height="112.00" fill="url(#lg1)"/>
<path d="M4.6 526.2 L8.8 530.4 M8.8 526.2 L4.6 530.4" stroke="#1a1a1a" stroke-width="1.3" fill="none"/>
<g transform="translate(11.0 644.0) rotate(-90)"><text x="0" y="0" font-size="10.2" fill="#1a1a1a" font-family="'Liberation Sans','Noto Sans CJK JP',sans-serif" textLength="38.50" lengthAdjust="spacingAndGlyphs">ターミナル</text></g>
<rect x="14.00" y="524.20" width="1006.00" height="102.40" fill="#ffffff"/>
<line x1="13.60" y1="524.20" x2="13.60" y2="626.60" stroke="#a0a0a0" stroke-width="0.8"/>
<line x1="13.60" y1="524.00" x2="1020.00" y2="524.00" stroke="#a0a0a0" stroke-width="0.8"/>
<rect x="14.00" y="562.00" width="1006.00" height="16.80" fill="#ececec"/>
<rect x="14.00" y="595.60" width="1006.00" height="16.60" fill="#d2d2d2"/>
<line x1="14.00" y1="545.40" x2="1020.00" y2="545.40" stroke="#e0e0e0" stroke-width="0.9"/>
<line x1="14.00" y1="562.00" x2="1020.00" y2="562.00" stroke="#e6e6e6" stroke-width="0.8"/>
<line x1="14.00" y1="578.80" x2="1020.00" y2="578.80" stroke="#e6e6e6" stroke-width="0.8"/>
<line x1="14.00" y1="595.60" x2="1020.00" y2="595.60" stroke="#e6e6e6" stroke-width="0.8"/>
<line x1="113.00" y1="524.20" x2="113.00" y2="595.60" stroke="#e2e2e2" stroke-width="0.9"/>
<line x1="251.00" y1="524.20" x2="251.00" y2="595.60" stroke="#e2e2e2" stroke-width="0.9"/>
<line x1="319.30" y1="524.20" x2="319.30" y2="595.60" stroke="#e2e2e2" stroke-width="0.9"/>
<line x1="372.80" y1="524.20" x2="372.80" y2="595.60" stroke="#e2e2e2" stroke-width="0.9"/>
<line x1="441.20" y1="524.20" x2="441.20" y2="595.60" stroke="#e2e2e2" stroke-width="0.9"/>
<line x1="516.60" y1="524.20" x2="516.60" y2="595.60" stroke="#e2e2e2" stroke-width="0.9"/>
<line x1="592.70" y1="524.20" x2="592.70" y2="595.60" stroke="#e2e2e2" stroke-width="0.9"/>
<line x1="668.90" y1="524.20" x2="668.90" y2="595.60" stroke="#e2e2e2" stroke-width="0.9"/>
<line x1="745.10" y1="524.20" x2="745.10" y2="595.60" stroke="#e2e2e2" stroke-width="0.9"/>
<line x1="820.50" y1="524.20" x2="820.50" y2="595.60" stroke="#e2e2e2" stroke-width="0.9"/>
<line x1="896.30" y1="524.20" x2="896.30" y2="595.60" stroke="#e2e2e2" stroke-width="0.9"/>
<text x="20.00" y="538.00" font-size="9.6" fill="#1a1a1a" font-family="'Liberation Sans','Noto Sans CJK JP',sans-serif" textLength="39.50" lengthAdjust="spacingAndGlyphs">注文番号</text>
<path d="M70.4 537.8 l3.4 -5.4" stroke="#5a5a5a" stroke-width="0.8"/>
<text x="227.00" y="538.00" font-size="9.6" fill="#1a1a1a" font-family="'Liberation Sans','Noto Sans CJK JP',sans-serif" textLength="19.00" lengthAdjust="spacingAndGlyphs">時間</text>
<text x="276.00" y="538.00" font-size="9.6" fill="#1a1a1a" font-family="'Liberation Sans','Noto Sans CJK JP',sans-serif" textLength="38.00" lengthAdjust="spacingAndGlyphs">取引種別</text>
<text x="349.00" y="538.00" font-size="9.6" fill="#1a1a1a" font-family="'Liberation Sans','Noto Sans CJK JP',sans-serif" textLength="19.00" lengthAdjust="spacingAndGlyphs">数量</text>
<text x="400.00" y="538.00" font-size="9.6" fill="#1a1a1a" font-family="'Liberation Sans','Noto Sans CJK JP',sans-serif" textLength="36.50" lengthAdjust="spacingAndGlyphs">通貨ペア</text>
<text x="493.00" y="538.00" font-size="9.6" fill="#1a1a1a" font-family="'Liberation Sans','Noto Sans CJK JP',sans-serif" textLength="19.00" lengthAdjust="spacingAndGlyphs">価格</text>
<text x="528.00" y="538.00" font-size="9.6" fill="#1a1a1a" font-family="'Liberation Sans','Noto Sans CJK JP',sans-serif" textLength="61.00" lengthAdjust="spacingAndGlyphs">決済逆指値(...</text>
<text x="602.20" y="538.00" font-size="9.6" fill="#1a1a1a" font-family="'Liberation Sans','Noto Sans CJK JP',sans-serif" textLength="62.00" lengthAdjust="spacingAndGlyphs">決済指値(T/P)</text>
<text x="721.40" y="538.00" font-size="9.6" fill="#1a1a1a" font-family="'Liberation Sans','Noto Sans CJK JP',sans-serif" textLength="19.00" lengthAdjust="spacingAndGlyphs">価格</text>
<text x="787.70" y="538.00" font-size="9.6" fill="#1a1a1a" font-family="'Liberation Sans','Noto Sans CJK JP',sans-serif" textLength="28.50" lengthAdjust="spacingAndGlyphs">手数料</text>
<text x="862.40" y="538.00" font-size="9.6" fill="#1a1a1a" font-family="'Liberation Sans','Noto Sans CJK JP',sans-serif" textLength="30.00" lengthAdjust="spacingAndGlyphs">スワップ</text>
<text x="995.60" y="538.00" font-size="9.6" fill="#1a1a1a" font-family="'Liberation Sans','Noto Sans CJK JP',sans-serif" textLength="19.00" lengthAdjust="spacingAndGlyphs">損益</text>
<text x="248.20" y="557.30" font-size="9.70" fill="#262626" text-anchor="end" textLength="83.40" lengthAdjust="spacingAndGlyphs">2025.11.14 23:39:09</text>
<text x="316.60" y="557.30" font-size="9.70" fill="#262626" text-anchor="end" textLength="14.00" lengthAdjust="spacingAndGlyphs">sell</text>
<text x="369.70" y="557.30" font-size="9.70" fill="#262626" text-anchor="end" textLength="17.60" lengthAdjust="spacingAndGlyphs">0.04</text>
<text x="438.00" y="557.30" font-size="9.70" fill="#262626" text-anchor="end" textLength="45.70" lengthAdjust="spacingAndGlyphs">goldmicro</text>
<text x="514.20" y="557.30" font-size="9.70" fill="#262626" text-anchor="end" textLength="33.20" lengthAdjust="spacingAndGlyphs">4079.29</text>
<text x="590.40" y="557.30" font-size="9.70" fill="#262626" text-anchor="end" textLength="17.60" lengthAdjust="spacingAndGlyphs">0.00</text>
<text x="665.80" y="557.30" font-size="9.70" fill="#262626" text-anchor="end" textLength="17.60" lengthAdjust="spacingAndGlyphs">0.00</text>
<text x="742.40" y="557.30" font-size="9.70" fill="#262626" text-anchor="end" textLength="33.20" lengthAdjust="spacingAndGlyphs">4080.74</text>
<text x="818.10" y="557.30" font-size="9.70" fill="#262626" text-anchor="end">0</text>
<text x="893.90" y="557.30" font-size="9.70" fill="#262626" text-anchor="end">0</text>
<text x="1000.20" y="557.30" font-size="9.70" fill="#262626" text-anchor="end">-9</text>
<path d="M1008.40 551.70 l4.6 4.6 m0 -4.6 l-4.6 4.6" stroke="#8c8c8c" stroke-width="1" fill="none"/>
<path d="M17.40 548.00 h5.4 l3 3 v8.4 h-8.4 z" fill="#ffffff" stroke="#6a6a6a" stroke-width="0.9"/><path d="M22.80 548.00 v3 h3" fill="none" stroke="#6a6a6a" stroke-width="0.7"/>
<circle cx="25.40" cy="557.60" r="2.9" fill="#e03818" stroke="#ffffff" stroke-width="0.4"/>
<text x="248.20" y="573.90" font-size="9.70" fill="#262626" text-anchor="end" textLength="83.40" lengthAdjust="spacingAndGlyphs">2025.11.14 23:42:32</text>
<text x="316.60" y="573.90" font-size="9.70" fill="#262626" text-anchor="end" textLength="17.20" lengthAdjust="spacingAndGlyphs">buy</text>
<text x="369.70" y="573.90" font-size="9.70" fill="#262626" text-anchor="end" textLength="17.60" lengthAdjust="spacingAndGlyphs">0.04</text>
<text x="438.00" y="573.90" font-size="9.70" fill="#262626" text-anchor="end" textLength="45.70" lengthAdjust="spacingAndGlyphs">goldmicro</text>
<text x="514.20" y="573.90" font-size="9.70" fill="#262626" text-anchor="end" textLength="33.20" lengthAdjust="spacingAndGlyphs">4080.68</text>
<text x="590.40" y="573.90" font-size="9.70" fill="#262626" text-anchor="end" textLength="17.60" lengthAdjust="spacingAndGlyphs">0.00</text>
<text x="665.80" y="573.90" font-size="9.70" fill="#262626" text-anchor="end" textLength="17.60" lengthAdjust="spacingAndGlyphs">0.00</text>
<text x="742.40" y="573.90" font-size="9.70" fill="#262626" text-anchor="end" textLength="33.20" lengthAdjust="spacingAndGlyphs">4080.33</text>
<text x="818.10" y="573.90" font-size="9.70" fill="#262626" text-anchor="end">0</text>
<text x="893.90" y="573.90" font-size="9.70" fill="#262626" text-anchor="end">0</text>
<text x="1000.20" y="573.90" font-size="9.70" fill="#262626" text-anchor="end">-2</text>
<path d="M1008.40 568.30 l4.6 4.6 m0 -4.6 l-4.6 4.6" stroke="#8c8c8c" stroke-width="1" fill="none"/>
<path d="M17.40 564.60 h5.4 l3 3 v8.4 h-8.4 z" fill="#ffffff" stroke="#6a6a6a" stroke-width="0.9"/><path d="M22.80 564.60 v3 h3" fill="none" stroke="#6a6a6a" stroke-width="0.7"/>
<circle cx="25.40" cy="574.20" r="2.9" fill="#2a86e0" stroke="#ffffff" stroke-width="0.4"/>
<text x="248.20" y="590.70" font-size="9.70" fill="#262626" text-anchor="end" textLength="83.40" lengthAdjust="spacingAndGlyphs">2025.11.14 23:43:06</text>
<text x="316.60" y="590.70" font-size="9.70" fill="#262626" text-anchor="end" textLength="14.00" lengthAdjust="spacingAndGlyphs">sell</text>
<text x="369.70" y="590.70" font-size="9.70" fill="#262626" text-anchor="end" textLength="17.60" lengthAdjust="spacingAndGlyphs">0.06</text>
<text x="438.00" y="590.70" font-size="9.70" fill="#262626" text-anchor="end" textLength="45.70" lengthAdjust="spacingAndGlyphs">goldmicro</text>
<text x="514.20" y="590.70" font-size="9.70" fill="#262626" text-anchor="end" textLength="33.20" lengthAdjust="spacingAndGlyphs">4081.04</text>
<text x="590.40" y="590.70" font-size="9.70" fill="#262626" text-anchor="end" textLength="17.60" lengthAdjust="spacingAndGlyphs">0.00</text>
<text x="665.80" y="590.70" font-size="9.70" fill="#262626" text-anchor="end" textLength="17.60" lengthAdjust="spacingAndGlyphs">0.00</text>
<text x="742.40" y="590.70" font-size="9.70" fill="#262626" text-anchor="end" textLength="33.20" lengthAdjust="spacingAndGlyphs">4080.74</text>
<text x="818.10" y="590.70" font-size="9.70" fill="#262626" text-anchor="end">0</text>
<text x="893.90" y="590.70" font-size="9.70" fill="#262626" text-anchor="end">0</text>
<text x="1000.20" y="590.70" font-size="9.70" fill="#262626" text-anchor="end">3</text>
<path d="M1008.40 585.10 l4.6 4.6 m0 -4.6 l-4.6 4.6" stroke="#8c8c8c" stroke-width="1" fill="none"/>
<path d="M17.40 581.40 h5.4 l3 3 v8.4 h-8.4 z" fill="#ffffff" stroke="#6a6a6a" stroke-width="0.9"/><path d="M22.80 581.40 v3 h3" fill="none" stroke="#6a6a6a" stroke-width="0.7"/>
<circle cx="25.40" cy="591.00" r="2.9" fill="#e03818" stroke="#ffffff" stroke-width="0.4"/>
<rect x="17.4" y="598.80" width="8.6" height="9.6" fill="#ffffff" stroke="#8a8a8a" stroke-width="0.8"/><path d="M20.5 600.20 h2.6 v2.6 h1.7 l-3 3.2 -3 -3.2 h1.7 z" fill="#e8381c" stroke="#8a2010" stroke-width="0.4"/>
<text x="33.00" y="607.50" font-size="9.6" font-weight="bold" fill="#1a1a1a" font-family="'Liberation Sans','Noto Sans CJK JP',sans-serif" textLength="72.00" lengthAdjust="spacingAndGlyphs">残高: 10 731 JPY</text>
<text x="110.00" y="607.50" font-size="9.6" font-weight="bold" fill="#1a1a1a" font-family="'Liberation Sans','Noto Sans CJK JP',sans-serif" textLength="76.20" lengthAdjust="spacingAndGlyphs">クレジット計: 1 468</text>
<text x="192.50" y="607.50" font-size="9.6" font-weight="bold" fill="#1a1a1a" font-family="'Liberation Sans','Noto Sans CJK JP',sans-serif" textLength="82.50" lengthAdjust="spacingAndGlyphs">有効証拠金: 12 191</text>
<text x="280.20" y="607.50" font-size="9.6" font-weight="bold" fill="#1a1a1a" font-family="'Liberation Sans','Noto Sans CJK JP',sans-serif" textLength="66.00" lengthAdjust="spacingAndGlyphs">必要証拠金: 38</text>
<text x="353.30" y="607.50" font-size="9.6" font-weight="bold" fill="#1a1a1a" font-family="'Liberation Sans','Noto Sans CJK JP',sans-serif" textLength="82.00" lengthAdjust="spacingAndGlyphs">余剰証拠金: 12 153</text>
<text x="442.30" y="607.50" font-size="9.6" font-weight="bold" fill="#1a1a1a" font-family="'Liberation Sans','Noto Sans CJK JP',sans-serif" textLength="114.90" lengthAdjust="spacingAndGlyphs">証拠金維持率: 32081.58%</text>
<text x="999.00" y="607.50" font-size="9.70" fill="#1a1a1a" text-anchor="end" font-weight="bold">-8</text>
<line x1="53.00" y1="626.90" x2="1020.00" y2="626.90" stroke="#303030" stroke-width="1.4"/>
<path d="M16.4 627 v15.6 h36.6 v-15.6" fill="#ffffff" stroke="#303030" stroke-width="1.1"/>
<line x1="17.00" y1="643.20" x2="53.60" y2="643.20" stroke="#303030" stroke-width="1.2"/>
<line x1="53.40" y1="627.00" x2="53.40" y2="643.40" stroke="#303030" stroke-width="1.4"/>
<text x="24.60" y="638.60" font-size="9.6" fill="#1a1a1a" font-family="'Liberation Sans','Noto Sans CJK JP',sans-serif" textLength="19.00" lengthAdjust="spacingAndGlyphs">取引</text>
<text x="61.50" y="638.60" font-size="9.6" fill="#787878" font-family="'Liberation Sans','Noto Sans CJK JP',sans-serif" textLength="40.00" lengthAdjust="spacingAndGlyphs">運用比率</text>
<text x="119.80" y="638.60" font-size="9.6" fill="#787878" font-family="'Liberation Sans','Noto Sans CJK JP',sans-serif" textLength="38.80" lengthAdjust="spacingAndGlyphs">口座履歴</text>
<text x="176.60" y="638.60" font-size="9.6" fill="#787878" font-family="'Liberation Sans','Noto Sans CJK JP',sans-serif" textLength="28.90" lengthAdjust="spacingAndGlyphs">ニュース</text>
<text x="222.40" y="638.60" font-size="9.6" fill="#787878" font-family="'Liberation Sans','Noto Sans CJK JP',sans-serif" textLength="47.80" lengthAdjust="spacingAndGlyphs">アラーム設定</text>
<text x="288.00" y="638.60" font-size="9.6" fill="#787878" font-family="'Liberation Sans','Noto Sans CJK JP',sans-serif" textLength="52.00" lengthAdjust="spacingAndGlyphs">メールボックス</text>
<text x="364.00" y="638.60" font-size="9.6" fill="#787878" font-family="'Liberation Sans','Noto Sans CJK JP',sans-serif" textLength="34.50" lengthAdjust="spacingAndGlyphs">マーケット</text>
<text x="416.00" y="638.60" font-size="9.6" fill="#787878" font-family="'Liberation Sans','Noto Sans CJK JP',sans-serif" textLength="30.00" lengthAdjust="spacingAndGlyphs">シグナル</text>
<text x="464.00" y="638.60" font-size="9.6" fill="#787878" font-family="'Liberation Sans','Noto Sans CJK JP',sans-serif" textLength="18.50" lengthAdjust="spacingAndGlyphs">記事</text>
<text x="500.50" y="638.60" font-size="9.6" fill="#787878" font-family="'Liberation Sans','Noto Sans CJK JP',sans-serif" textLength="35.00" lengthAdjust="spacingAndGlyphs">ライブラリ</text>
<text x="553.00" y="638.60" font-size="9.6" fill="#787878" font-family="'Liberation Sans','Noto Sans CJK JP',sans-serif" textLength="44.00" lengthAdjust="spacingAndGlyphs">エキスパート</text>
<text x="615.50" y="638.60" font-size="9.6" fill="#787878" font-family="'Liberation Sans','Noto Sans CJK JP',sans-serif" textLength="39.00" lengthAdjust="spacingAndGlyphs">操作履歴</text>
<line x1="110.60" y1="630.60" x2="110.60" y2="641.60" stroke="#6a6a6a" stroke-width="0.8"/>
<line x1="167.60" y1="630.60" x2="167.60" y2="641.60" stroke="#6a6a6a" stroke-width="0.8"/>
<line x1="213.80" y1="630.60" x2="213.80" y2="641.60" stroke="#6a6a6a" stroke-width="0.8"/>
<line x1="279.40" y1="630.60" x2="279.40" y2="641.60" stroke="#6a6a6a" stroke-width="0.8"/>
<line x1="355.00" y1="630.60" x2="355.00" y2="641.60" stroke="#6a6a6a" stroke-width="0.8"/>
<line x1="407.40" y1="630.60" x2="407.40" y2="641.60" stroke="#6a6a6a" stroke-width="0.8"/>
<line x1="455.00" y1="630.60" x2="455.00" y2="641.60" stroke="#6a6a6a" stroke-width="0.8"/>
<line x1="491.80" y1="630.60" x2="491.80" y2="641.60" stroke="#6a6a6a" stroke-width="0.8"/>
<line x1="544.40" y1="630.60" x2="544.40" y2="641.60" stroke="#6a6a6a" stroke-width="0.8"/>
<line x1="606.20" y1="630.60" x2="606.20" y2="641.60" stroke="#6a6a6a" stroke-width="0.8"/>
<line x1="663.60" y1="630.60" x2="663.60" y2="641.60" stroke="#6a6a6a" stroke-width="0.8"/>
<text x="341.00" y="642.00" font-size="6.60" fill="#e03818" font-weight="bold">6</text>
<line x1="0.00" y1="647.30" x2="1024.00" y2="647.30" stroke="#d0d0d0" stroke-width="0.8"/>
<text x="2.50" y="662.60" font-size="9.8" fill="#1a1a1a" font-family="'Liberation Sans','Noto Sans CJK JP',sans-serif" textLength="117.00" lengthAdjust="spacingAndGlyphs">F1キーでヘルプが表示されます</text>
<line x1="423.60" y1="650.00" x2="423.60" y2="667.00" stroke="#c0c0c0" stroke-width="0.9"/>
<line x1="521.00" y1="650.00" x2="521.00" y2="667.00" stroke="#c0c0c0" stroke-width="0.9"/>
<line x1="607.00" y1="650.00" x2="607.00" y2="667.00" stroke="#c0c0c0" stroke-width="0.9"/>
<line x1="666.00" y1="650.00" x2="666.00" y2="667.00" stroke="#c0c0c0" stroke-width="0.9"/>
<line x1="727.50" y1="650.00" x2="727.50" y2="667.00" stroke="#c0c0c0" stroke-width="0.9"/>
<line x1="784.00" y1="650.00" x2="784.00" y2="667.00" stroke="#c0c0c0" stroke-width="0.9"/>
<line x1="842.80" y1="650.00" x2="842.80" y2="667.00" stroke="#c0c0c0" stroke-width="0.9"/>
<line x1="898.60" y1="650.00" x2="898.60" y2="667.00" stroke="#c0c0c0" stroke-width="0.9"/>
<text x="428.70" y="662.40" font-size="9.60" fill="#1a1a1a" textLength="31.60" lengthAdjust="spacingAndGlyphs">Default</text>
<rect x="903.20" y="653.60" width="1.05" height="11.00" fill="#8a7432"/>
<rect x="903.20" y="662.40" width="1.05" height="2.20" fill="#1f4e6e"/>
<rect x="905.26" y="653.60" width="1.05" height="11.00" fill="#8a7432"/>
<rect x="905.26" y="661.55" width="1.05" height="3.05" fill="#1f4e6e"/>
<rect x="907.32" y="653.60" width="1.05" height="11.00" fill="#8a7432"/>
<rect x="907.32" y="660.70" width="1.05" height="3.90" fill="#1f4e6e"/>
<rect x="909.38" y="653.60" width="1.05" height="11.00" fill="#8a7432"/>
<rect x="909.38" y="659.85" width="1.05" height="4.75" fill="#1f4e6e"/>
<rect x="911.44" y="653.60" width="1.05" height="11.00" fill="#8a7432"/>
<rect x="911.44" y="659.00" width="1.05" height="5.60" fill="#1f4e6e"/>
<rect x="913.50" y="653.60" width="1.05" height="11.00" fill="#8a7432"/>
<rect x="913.50" y="658.15" width="1.05" height="6.45" fill="#1f4e6e"/>
<rect x="915.56" y="653.60" width="1.05" height="11.00" fill="#8a7432"/>
<rect x="915.56" y="657.30" width="1.05" height="7.30" fill="#1f4e6e"/>
<rect x="917.62" y="653.60" width="1.05" height="11.00" fill="#8a7432"/>
<rect x="917.62" y="656.45" width="1.05" height="8.15" fill="#1f4e6e"/>
<rect x="919.68" y="653.60" width="1.05" height="11.00" fill="#8a7432"/>
<rect x="919.68" y="655.60" width="1.05" height="9.00" fill="#1f4e6e"/>
<rect x="921.74" y="653.60" width="1.05" height="11.00" fill="#8a7432"/>
<rect x="921.74" y="654.75" width="1.05" height="9.85" fill="#1f4e6e"/>
<text x="927.10" y="662.50" font-size="9.30" fill="#303030" textLength="56.70" lengthAdjust="spacingAndGlyphs">119709/74 kb</text>
<path d="M1018.40 667.4 L1021.6 664.20" stroke="#b0b0b0" stroke-width="0.9"/>
<path d="M1015.20 667.4 L1021.6 661.00" stroke="#b0b0b0" stroke-width="0.9"/>
<path d="M1012.00 667.4 L1021.6 657.80" stroke="#b0b0b0" stroke-width="0.9"/>
<rect x="0.00" y="0.00" width="1024.00" height="0.90" fill="#30637f"/>
<rect x="0.00" y="0.00" width="1.00" height="669.00" fill="#30637f"/>
<rect x="1022.50" y="0.00" width="1.50" height="669.00" fill="#33597a"/>
<rect x="0.00" y="668.00" width="1024.00" height="1.00" fill="#2f6580"/></svg>
</body></html>
